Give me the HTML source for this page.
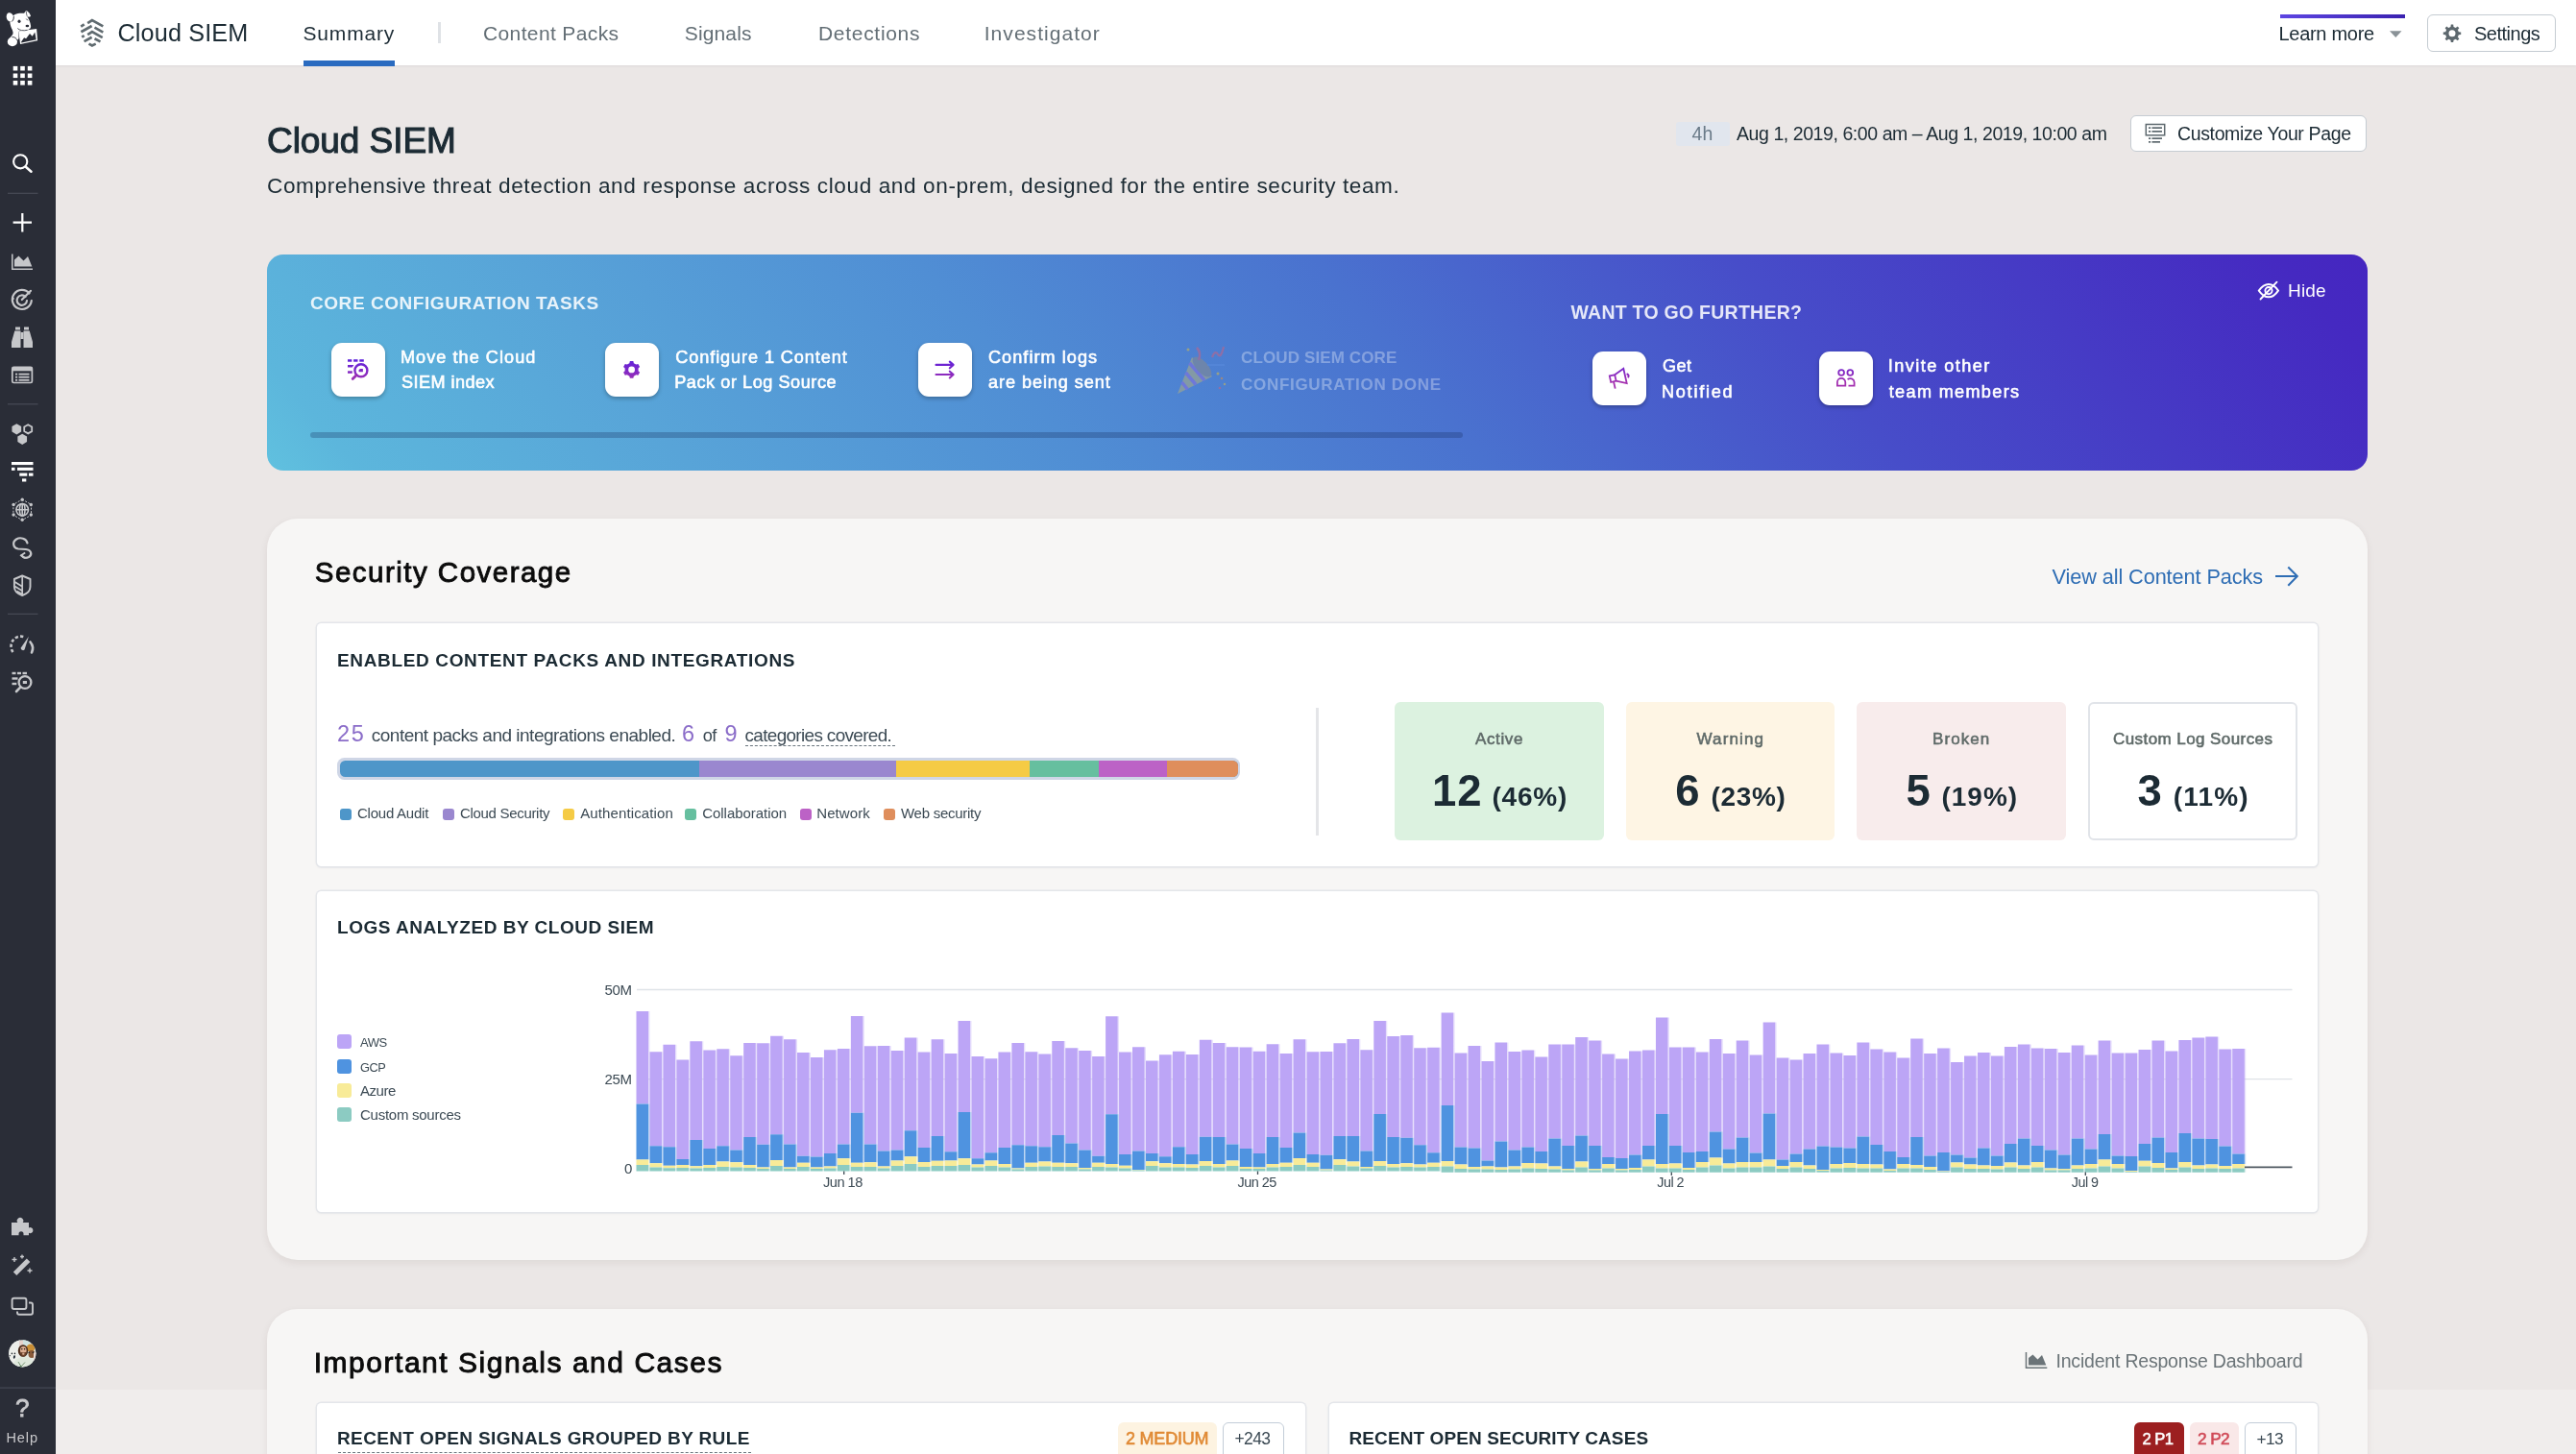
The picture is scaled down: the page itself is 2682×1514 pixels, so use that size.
<!DOCTYPE html>
<html lang="en"><head><meta charset="utf-8"><title>Cloud SIEM</title>
<style>
*{box-sizing:border-box;margin:0;padding:0}
html,body{width:2682px;height:1514px;overflow:hidden;background:#ebe7e6;font-family:"Liberation Sans",sans-serif}
.abs,.t,.b{position:absolute}
.t{white-space:pre;line-height:1;z-index:5}
svg{display:block;overflow:visible}
#side{left:0;top:0;width:58px;height:1514px;background:#2a2d37}
#top{left:58px;top:0;width:2624px;height:67.5px;background:#fff;box-shadow:0 1px 2px rgba(0,0,0,.06)}
#banner{left:278px;top:265px;width:2187px;height:224.500px;border-radius:17px;background:linear-gradient(50deg,#60c1df 0%,#5cb6dc 4%,#58a4d8 18.700%,#508ed4 36.200%,#4a72cf 53.700%,#474dc9 72%,#4529c1 96%,#4526c0 100%)}
.ib{width:56px;height:56px;border-radius:11px;background:#fff;box-shadow:0 2px 4px rgba(0,0,0,.28)}
.card{background:#f7f6f5;border-radius:32px;box-shadow:0 3px 8px rgba(60,30,20,.07)}
.in{background:#fff;border-radius:4.500px;box-shadow:0 0 0 1.400px #e4e6ea,0 1px 2px 1px rgba(120,130,150,.10)}
.stat{width:217.500px;height:144px;top:731px;border-radius:6px}
.lg{width:12px;height:12px;border-radius:3px;top:841.500px}
.lg2{width:15px;height:15px;border-radius:3px;left:351px}
.pill{border-radius:6px;height:40px;top:1481.300px}
@media (max-width:1500px){html{zoom:.5}}
</style></head><body>
<div class="b" style="left:58px;top:1447px;width:2624px;height:67px;background:#f0edec"></div>
<div id="side" class="b"></div>
<svg class="abs" style="left:0;top:0" width="58" height="1514" viewBox="0 0 58 1514"><g fill="#fff"><ellipse cx="10.500" cy="18" rx="3.700" ry="4.900" transform="rotate(-18 10.500 18)"/><path d="M13.800 16.200C16.500 13.600 21 13.500 25.100 13.700L27.100 10.900C29.200 11.200 31.600 14.400 32 17L30.100 17.700L28.300 17C29.700 19.200 31.600 23 32.100 27.100C32.200 28.500 31.700 29.500 31 29.900L28.400 31.500C26 32.700 22.500 32.600 20.500 32.200L19.300 33L19.600 40L16.500 44L11 38.500C12.800 36.800 13.900 35.500 13.500 33.500L12.800 31C11.500 28.500 10.600 26 10.300 23.200L13 22Z"/><ellipse cx="12.900" cy="43.400" rx="5.100" ry="4.900"/><path d="M19.300 32.400L38.100 30.100L39.100 42.300L21.100 46.100Z"/></g><path d="M22.100 43.600L25.100 39.300L27.100 40.300L31 35L33.700 37.700L36.300 33.400L37.700 41.300L22.300 44.600Z" fill="#2a2d37"/><ellipse cx="20" cy="22.200" rx="1.500" ry="1.700" fill="#2a2d37"/><ellipse cx="28.400" cy="27" rx="1.850" ry="1.200" fill="#2a2d37"/><path d="M18.300 29.500Q21.500 32.800 28.600 31.300" fill="none" stroke="#2a2d37" stroke-width="0.800"/><path d="M27.300 19.600L28.900 21.300" fill="none" stroke="#2a2d37" stroke-width="0.900"/><path d="M12.600 22.300Q14.600 20.500 14.400 16.800" fill="none" stroke="#2a2d37" stroke-width="0.900"/><path d="M28.200 16.800Q27.200 14 27.300 11.500" fill="none" stroke="#2a2d37" stroke-width="0.700"/><path d="M12.500 38.600Q16.500 38.200 18.300 42.500" fill="none" stroke="#2a2d37" stroke-width="0.900"/><rect x="13.7" y="68.9" width="4.600" height="4.600" fill="#fff"/><rect x="21.2" y="68.9" width="4.600" height="4.600" fill="#fff"/><rect x="28.8" y="68.9" width="4.600" height="4.600" fill="#fff"/><rect x="13.7" y="76.5" width="4.600" height="4.600" fill="#fff"/><rect x="21.2" y="76.5" width="4.600" height="4.600" fill="#fff"/><rect x="28.8" y="76.5" width="4.600" height="4.600" fill="#fff"/><rect x="13.7" y="84.0" width="4.600" height="4.600" fill="#fff"/><rect x="21.2" y="84.0" width="4.600" height="4.600" fill="#fff"/><rect x="28.8" y="84.0" width="4.600" height="4.600" fill="#fff"/><circle cx="21.200" cy="168.300" r="7.100" fill="none" stroke="#fff" stroke-width="2.100"/><path d="M26.800 173.800L32.500 178.800" stroke="#fff" stroke-width="2.500" stroke-linecap="round"/><rect x="8" y="200.7" width="31.500" height="1.200" fill="#474b56"/><path d="M13.600 231.700H33M23.300 222V241.400" stroke="#fff" stroke-width="2.200"/><path d="M12.800 264.500V280.300H34" fill="none" stroke="#c6c7ca" stroke-width="1.500"/><path d="M15 277.500V270.500L19.500 266.500L24.500 271.500L29 267L33.300 277.500Z" fill="#c6c7ca"/><g fill="none" stroke="#c6c7ca" stroke-width="2.200" stroke-linecap="round"><path d="M30.500 305.500A10 10 0 1 0 32.800 313"/><path d="M26.500 309A5.200 5.200 0 1 0 28 313"/><path d="M22.800 312L32 302.800"/></g><circle cx="13.500" cy="311" r="1.300" fill="#c6c7ca"/><g fill="#c6c7ca"><path d="M16 340.500h5v3h-5zM25 340.500h5v3h-5z"/><path d="M15.300 344.500h6.200v17.500h-9.500v-6z"/><path d="M24.500 344.500h6.200l3.300 11.500v6h-9.500z"/><rect x="21.500" y="346" width="3" height="7"/></g><rect x="12.800" y="382.300" width="20.600" height="16.200" rx="1.500" fill="none" stroke="#c6c7ca" stroke-width="1.700"/><rect x="12.800" y="382.300" width="20.600" height="4" fill="#c6c7ca"/><g fill="#c6c7ca"><rect x="16" y="388.700" width="2.200" height="1.800"/><rect x="19.500" y="388.700" width="11" height="1.800"/><rect x="16" y="391.800" width="2.200" height="1.800"/><rect x="19.500" y="391.800" width="11" height="1.800"/><rect x="16" y="394.900" width="2.200" height="1.800"/><rect x="19.500" y="394.900" width="11" height="1.800"/></g><rect x="8" y="420.2" width="31.500" height="1.200" fill="#474b56"/><polygon points="22.15,449.60 17.30,452.40 12.45,449.60 12.45,444.00 17.30,441.20 22.15,444.00" fill="#c6c7ca"/><polygon points="33.18,449.10 29.20,451.40 25.22,449.10 25.22,444.50 29.20,442.20 33.18,444.50" fill="none" stroke="#c6c7ca" stroke-width="1.800"/><polygon points="28.05,460.10 23.20,462.90 18.35,460.10 18.35,454.50 23.20,451.70 28.05,454.50" fill="#c6c7ca"/><g fill="#fff"><rect x="12" y="481" width="22.500" height="3.100"/><rect x="12" y="486.800" width="3.500" height="3.100"/><rect x="18" y="486.800" width="16.500" height="3.100"/><rect x="20.300" y="492.600" width="8" height="3.100"/><rect x="30" y="492.600" width="4.500" height="3.100"/><rect x="23" y="498.400" width="4.300" height="3.100"/></g><g fill="none" stroke="#c6c7ca" stroke-width="1.600"><circle cx="23.200" cy="530.800" r="6.300"/><ellipse cx="23.200" cy="530.800" rx="2.800" ry="6.300"/><path d="M17 530.800H29.500M23.200 524.500V537"/></g><polygon points="23.200,520 32.500,525.400 32.500,536.200 23.200,541.600 13.900,536.200 13.900,525.400" fill="none" stroke="#c6c7ca" stroke-width="1" stroke-dasharray="2 1.500"/><g fill="#c6c7ca"><circle cx="23.200" cy="520.300" r="1.700"/><circle cx="32.300" cy="525.500" r="1.700"/><circle cx="32.300" cy="536" r="1.700"/><circle cx="23.200" cy="541.300" r="1.700"/><circle cx="14.100" cy="536" r="1.700"/><circle cx="14.100" cy="525.500" r="1.700"/></g><path d="M28.500 565.500C27.500 560.500 21 559 17 561.500C12.500 564.500 13.500 570.500 19 571.500L27 572C32.500 572.500 34 577.500 30 580C27 581.500 24 580.500 22.500 578.500" fill="none" stroke="#c6c7ca" stroke-width="2.200" stroke-linecap="round"/><path d="M26.200 575.500L22 578.200L26 581.200" fill="none" stroke="#c6c7ca" stroke-width="1.800"/><path d="M23.200 599.500L31.500 603V611C31.500 615.500 27.500 618.500 23.200 620C18.900 618.500 14.900 615.500 14.900 611V603Z" fill="none" stroke="#c6c7ca" stroke-width="1.900" stroke-linejoin="round"/><path d="M23.200 599.500V620M15.500 606L22.800 610.500M15.500 610.500L22.800 615M17.500 615.500L22.800 618.500" stroke="#c6c7ca" stroke-width="1.700" fill="none"/><rect x="8" y="638.7" width="31.500" height="1.200" fill="#474b56"/><path d="M13.500 679A10.300 10.300 0 0 1 25.500 663.300" fill="none" stroke="#c6c7ca" stroke-width="2.600" stroke-dasharray="3.200 2.200"/><path d="M31.500 668.500A10.300 10.300 0 0 1 33 679.500" fill="none" stroke="#c6c7ca" stroke-width="2.600" stroke-linecap="round"/><path d="M30 662.500L25.500 676.500A2.200 2.200 0 0 1 21.800 674.500Z" fill="#c6c7ca"/><g fill="#c6c7ca"><rect x="12.500" y="699.800" width="4" height="2.400"/><rect x="18" y="699.800" width="4" height="2.400"/><rect x="23.500" y="699.800" width="4.500" height="2.400"/><rect x="12.500" y="705.300" width="6" height="2.400"/><rect x="12.500" y="710.800" width="4.800" height="2.400"/><rect x="23.800" y="709" width="4.200" height="3"/></g><circle cx="26" cy="710.500" r="6.400" fill="none" stroke="#c6c7ca" stroke-width="2.300"/><path d="M21 715.800L17 720" stroke="#c6c7ca" stroke-width="2.600" stroke-linecap="round"/><path d="M12 1273h6.300a3.300 3.300 0 1 1 5.400 0H30v5.500a3 3 0 1 1 0 5.300v2.500H24.500v-1.500a2.500 2.500 0 1 0-5 0v1.500H12z" fill="#c6c7ca"/><path d="M13.800 1324.500L27.800 1310.500L31.300 1314L17.300 1328Z" fill="#c6c7ca"/><g stroke="#c6c7ca" stroke-width="1.400"><path d="M15 1309V1314M12.500 1311.500H17.500M23 1306.500V1310.500M21 1308.500H25M31 1320.500V1325.500M28.500 1323H33.500"/></g><g fill="none" stroke="#c6c7ca" stroke-width="1.900"><rect x="12.600" y="1351.700" width="14.800" height="11.300" rx="2"/><path d="M30 1356.500h2a2 2 0 0 1 2 2V1366.800a2 2 0 0 1-2 2H20a2 2 0 0 1-2-2V1365.500"/></g><defs><clipPath id="av"><circle cx="23.300" cy="1409.300" r="14.100"/></clipPath></defs><g clip-path="url(#av)"><rect x="8" y="1394" width="32" height="32" fill="#e4e9e3"/><rect x="8" y="1394" width="13" height="32" fill="#eceeea"/><rect x="24" y="1395" width="7" height="9" fill="#cfe3e2"/><rect x="20" y="1396" width="4" height="8" fill="#e6d2cc"/><ellipse cx="32" cy="1403.500" rx="4.500" ry="4" fill="#c98e35"/><ellipse cx="33" cy="1410" rx="3.500" ry="4" fill="#8a5a3a"/><rect x="35" y="1408" width="3" height="9" fill="#ead8d2"/><circle cx="30.300" cy="1408.300" r="0.900" fill="#2a2420"/><circle cx="34.500" cy="1408.300" r="0.900" fill="#2a2420"/><ellipse cx="24.500" cy="1420.500" rx="10" ry="7.500" fill="#dfe8dc"/><path d="M19 1418l3 5 4-4.500" fill="none" stroke="#7d9a7a" stroke-width="1"/><path d="M19.500 1424.500l2-3 2 3z" fill="#4f7a52"/><ellipse cx="24" cy="1406.500" rx="5.200" ry="6.300" fill="#4a2d1d"/><ellipse cx="24.300" cy="1406.300" rx="3.300" ry="4.200" fill="#dcae92"/><path d="M21.300 1407.800q3 1.600 6 0q.300 4.200-3 5q-3.300-.800-3-5z" fill="#6a4029"/><ellipse cx="24.300" cy="1409.800" rx="1.300" ry=".900" fill="#e0b59b"/><circle cx="22.800" cy="1404.800" r="0.750" fill="#1f1a18"/><circle cx="25.600" cy="1404.800" r="0.750" fill="#1f1a18"/><circle cx="12.400" cy="1409.400" r="0.800" fill="#22262c"/><circle cx="15.400" cy="1409.400" r="0.800" fill="#22262c"/><ellipse cx="14.900" cy="1413" rx="1" ry="1.700" fill="#1b2530" transform="rotate(15 14.900 1413)"/><circle cx="10.200" cy="1411.600" r="0.700" fill="#22262c"/></g><rect x="0" y="1444.500" width="58" height="1.200" fill="#454954"/></svg>
<div id="top" class="b"></div>
<svg class="abs" style="left:76px;top:10px" width="40" height="46" viewBox="76 10 40 46"><g fill="none" stroke="#606b70" stroke-width="2.700"><path d="M91.200 24.100L95.900 21.100L107.300 27.400"/><path d="M84.200 27.600L87.700 25.400"/><path d="M84.400 33.300L95.600 27"/><path d="M98.500 28.600L107.300 33.600"/><path d="M91.200 36.100L95.900 33.100L106.700 39.100"/><path d="M85.200 38.700L87.700 37.100"/><path d="M87.600 43.100L95.600 38.700"/><path d="M98.500 40.300L104.500 43.400"/><path d="M92.500 45.600L95.900 47.500L99.700 45.600"/></g></svg>
<div class="b" style="left:315.500px;top:63.300px;width:95.300px;height:5.400px;background:#2a6bc0"></div>
<div class="b" style="left:456px;top:23px;width:2.500px;height:22px;background:#dfe2e6"></div>
<div class="b" style="left:2373.500px;top:15px;width:130.500px;height:4px;background:linear-gradient(90deg,#5d45e2,#3a22b0)"></div>
<svg class="abs" style="left:2487px;top:31px" width="15" height="9"><path d="M1 1.200H13.500L7.300 8Z" fill="#8a9297"/></svg>
<div class="b" style="left:2527px;top:15px;width:133.800px;height:38.500px;border:1.500px solid #c5ccd2;border-radius:6px;background:#fff"></div>
<svg class="abs" style="left:2542px;top:24px" width="22" height="22" viewBox="2542 24 22 22"><path d="M2551.47 27.97 L2551.78 25.58 L2554.22 25.58 L2554.53 27.97 L2556.75 28.89 L2558.65 27.42 L2560.38 29.15 L2558.91 31.05 L2559.83 33.27 L2562.22 33.58 L2562.22 36.02 L2559.83 36.33 L2558.91 38.55 L2560.38 40.45 L2558.65 42.18 L2556.75 40.71 L2554.53 41.63 L2554.22 44.02 L2551.78 44.02 L2551.47 41.63 L2549.25 40.71 L2547.35 42.18 L2545.62 40.45 L2547.09 38.55 L2546.17 36.33 L2543.78 36.02 L2543.78 33.58 L2546.17 33.27 L2547.09 31.05 L2545.62 29.15 L2547.35 27.42 L2549.25 28.89Z M2549.50 34.80 a3.50 3.50 0 1 0 7.00 0 a3.50 3.50 0 1 0 -7.00 0Z" fill="#5d686e" fill-rule="evenodd"/></svg>
<!-- time + customize -->
<div class="b" style="left:1744.500px;top:127px;width:56.500px;height:24.500px;background:#e1e6ee;border-radius:3px"></div>
<div class="b" style="left:2217.500px;top:120px;width:246.300px;height:38.300px;border:1.500px solid #c5ccd2;border-radius:6px;background:#fff"></div>
<svg class="abs" style="left:2232px;top:127px" width="24" height="24" viewBox="2232 127 24 24"><rect x="2234.300" y="129.500" width="19.400" height="11.300" fill="none" stroke="#5d686e" stroke-width="1.500"/><g fill="#5d686e"><rect x="2237" y="132.300" width="2.200" height="1.700"/><rect x="2240.500" y="132.300" width="10.500" height="1.700"/><rect x="2237" y="136" width="2.200" height="1.700"/><rect x="2240.500" y="136" width="10.500" height="1.700"/><rect x="2237" y="143.300" width="2.200" height="1.700"/><rect x="2240.500" y="143.300" width="10.500" height="1.700"/><rect x="2237" y="147" width="2.200" height="1.700"/><rect x="2240.500" y="147" width="8.500" height="1.700"/></g></svg>
<!-- banner -->
<div id="banner" class="b"></div>
<div class="b" style="left:323px;top:449.500px;width:1199.800px;height:6.800px;border-radius:3.500px;background:rgba(20,40,90,.27)"></div>
<div class="b ib" style="left:344.700px;top:357px"></div>
<div class="b ib" style="left:630px;top:357px"></div>
<div class="b ib" style="left:955.800px;top:357px"></div>
<div class="b ib" style="left:1657.700px;top:366px"></div>
<div class="b ib" style="left:1893.700px;top:366px"></div>
<svg class="abs" style="left:344px;top:356px" width="58" height="58" viewBox="344 356 58 58"><defs><linearGradient id="pg" gradientUnits="userSpaceOnUse" x1="0" y1="372" x2="0" y2="398"><stop offset="0" stop-color="#561fe0"/><stop offset="1" stop-color="#a431b0"/></linearGradient></defs><g fill="url(#pg)"><rect x="362" y="374.200" width="4.300" height="2.500"/><rect x="368.100" y="374.200" width="4.400" height="2.500"/><rect x="374.300" y="374.200" width="4.500" height="2.500"/><path d="M362 380.100h6.500l-1.800 2.500H362z"/><rect x="362" y="386.300" width="4.800" height="2.500"/><path d="M374.800 384h3.100v3.200h-4.300v-1.800z"/></g><circle cx="375.900" cy="385.800" r="6.500" fill="none" stroke="url(#pg)" stroke-width="2.400"/><path d="M370.800 391L367.200 394.600" stroke="#9a2fb4" stroke-width="2.800" stroke-linecap="round"/></svg><svg class="abs" style="left:629px;top:356px" width="58" height="58" viewBox="629 356 58 58"><defs><linearGradient id="pg" gradientUnits="userSpaceOnUse" x1="0" y1="372" x2="0" y2="398"><stop offset="0" stop-color="#561fe0"/><stop offset="1" stop-color="#a431b0"/></linearGradient></defs><path d="M655.34 378.17 L655.86 376.07 L659.34 376.07 L659.86 378.17 L662.30 379.57 L664.38 378.98 L666.12 381.99 L664.56 383.50 L664.56 386.30 L666.12 387.81 L664.38 390.82 L662.30 390.23 L659.86 391.63 L659.34 393.73 L655.86 393.73 L655.34 391.63 L652.90 390.23 L650.82 390.82 L649.08 387.81 L650.64 386.30 L650.64 383.50 L649.08 381.99 L650.82 378.98 L652.90 379.57Z M654.20 384.90 a3.40 3.40 0 1 0 6.80 0 a3.40 3.40 0 1 0 -6.80 0Z" fill="url(#pg)" fill-rule="evenodd"/></svg><svg class="abs" style="left:955px;top:356px" width="58" height="58" viewBox="955 356 58 58"><defs><linearGradient id="pg" gradientUnits="userSpaceOnUse" x1="0" y1="372" x2="0" y2="398"><stop offset="0" stop-color="#561fe0"/><stop offset="1" stop-color="#a431b0"/></linearGradient></defs><g fill="none" stroke="url(#pg)" stroke-width="2.100" stroke-linecap="round" stroke-linejoin="round"><path d="M974.500 379.900H992.300M988.800 376.600L992.600 379.900L988.800 383.300"/><path d="M974.500 390H992.300M988.800 386.700L992.600 390L988.800 393.500"/></g></svg><svg class="abs" style="left:1657px;top:365px" width="58" height="58" viewBox="1657 365 58 58"><defs><linearGradient id="pg" gradientUnits="userSpaceOnUse" x1="0" y1="381" x2="0" y2="407"><stop offset="0" stop-color="#561fe0"/><stop offset="1" stop-color="#a431b0"/></linearGradient></defs><g fill="none" stroke="url(#pg)" stroke-width="1.800" stroke-linejoin="miter"><path d="M1675.800 391.400L1681.200 390.300L1682.600 396.600L1677.200 398Z"/><path d="M1681.200 390.300L1690.300 383.700L1693.700 399.100L1682.600 396.600"/><path d="M1680.100 397.800L1681.700 404.600"/><path d="M1693.600 389.300Q1696.800 390.500 1695 393.300" stroke-width="2"/></g></svg><svg class="abs" style="left:1893px;top:365px" width="58" height="58" viewBox="1893 365 58 58"><defs><linearGradient id="pg" gradientUnits="userSpaceOnUse" x1="0" y1="381" x2="0" y2="407"><stop offset="0" stop-color="#561fe0"/><stop offset="1" stop-color="#a431b0"/></linearGradient></defs><g fill="none" stroke="url(#pg)" stroke-width="1.800"><circle cx="1917.100" cy="388" r="2.900"/><circle cx="1926.300" cy="388" r="2.900"/><path d="M1912.900 401.600V398a4.200 4.200 0 0 1 8.400 0V401.600Z"/><path d="M1923.600 395.200a4.200 4.200 0 0 1 7 2.800V401.600H1924.500"/></g></svg><svg class="abs" style="left:1222px;top:356px;opacity:.5" width="62" height="60" viewBox="1222 356 62 60"><path d="M1241 372L1226 410L1262 392Z" fill="#b9b27a"/><path d="M1238.500 378L1254 396M1234.500 388L1245 400.500M1230.500 398L1236.500 405.500" stroke="#8f6fe0" stroke-width="3.500"/><ellipse cx="1251.500" cy="382" rx="6" ry="13" transform="rotate(-42 1251.500 382)" fill="#8d8a86"/><path d="M1246 362q5 5 2 13" fill="none" stroke="#d0607c" stroke-width="2.500"/><path d="M1262 372q3-8 6-3t6-8" fill="none" stroke="#d0607c" stroke-width="2.200"/><path d="M1257 380h18" stroke="#5f8fe0" stroke-width="1.500"/><circle cx="1237" cy="364" r="1.500" fill="#e0c040"/><circle cx="1268" cy="389" r="1.500" fill="#e0c040"/><circle cx="1272" cy="394" r="1.300" fill="#e09040"/><circle cx="1270" cy="404" r="1.300" fill="#d0607c"/><circle cx="1275" cy="400" r="1.200" fill="#e0c040"/></svg><svg class="abs" style="left:2349px;top:291px" width="26" height="24" viewBox="2349 291 26 24"><g fill="none" stroke="#fff" stroke-width="1.900" stroke-linecap="round"><path d="M2351.800 302.600Q2356.500 296 2362 296Q2367.500 296 2372 302.600Q2367.500 309.300 2362 309.300Q2356.500 309.300 2351.800 302.600Z"/><circle cx="2362" cy="302.600" r="3.600"/><path d="M2353.500 311.500L2370.500 293.700"/></g></svg>
<!-- security coverage -->
<div class="b card" style="left:278px;top:540px;width:2186.500px;height:772px"></div>
<svg class="abs" style="left:2367px;top:588px" width="28" height="24" viewBox="2367 588 28 24"><path d="M2369 600H2391.500M2382.300 590.500L2391.800 600L2382.300 609.700" fill="none" stroke="#2e6db4" stroke-width="2"/></svg>
<div class="b in" style="left:330px;top:649px;width:2083px;height:253.300px"></div>
<div class="b" style="left:775.500px;top:775.500px;width:156px;height:0;border-top:1.500px dashed #6a757d"></div>
<div class="b" style="left:351px;top:789.400px;width:940.200px;height:22.200px;border-radius:7.500px;background:#cfd6e6"></div>
<div class="b" style="left:353.500px;top:792px;width:935px;height:16.800px;border-radius:5.500px;overflow:hidden;background:#4e96c9">
 <div class="b" style="left:374.750px;top:0;width:205px;height:17px;background:#9a87cf"></div>
 <div class="b" style="left:579.500px;top:0;width:139px;height:17px;background:#f5cb45"></div>
 <div class="b" style="left:718.500px;top:0;width:72px;height:17px;background:#66bf9f"></div>
 <div class="b" style="left:790.500px;top:0;width:71.300px;height:17px;background:#bc62c6"></div>
 <div class="b" style="left:861.750px;top:0;width:80px;height:17px;background:#df8e5c"></div>
</div>
<div class="b lg" style="left:353.800px;background:#4e96c9"></div>
<div class="b lg" style="left:460.500px;background:#9a87cf"></div>
<div class="b lg" style="left:585.500px;background:#f5cb45"></div>
<div class="b lg" style="left:712.500px;background:#66bf9f"></div>
<div class="b lg" style="left:832.500px;background:#bc62c6"></div>
<div class="b lg" style="left:919.700px;background:#df8e5c"></div>
<div class="b" style="left:1370.300px;top:737px;width:2.600px;height:132.500px;background:#e4e5e8"></div>
<div class="b stat" style="left:1452px;background:#dcf2e0"></div>
<div class="b stat" style="left:1692.500px;background:#fef5e4"></div>
<div class="b stat" style="left:1933px;background:#f8ecec"></div>
<div class="b stat" style="left:2174px;background:#fff;border:2px solid #e1e4e9"></div>
<!-- chart card -->
<div class="b in" style="left:330px;top:928px;width:2083px;height:333.700px"></div>
<div class="b lg2" style="top:1077.250px;background:#bca5f6"></div>
<div class="b lg2" style="top:1102.500px;background:#4f93e0"></div>
<div class="b lg2" style="top:1128px;background:#f8eb98"></div>
<div class="b lg2" style="top:1153.250px;background:#8ccbc2"></div>
<svg class="abs" style="left:0;top:0;z-index:3" width="2682" height="1514" viewBox="0 0 2682 1514">
<path d="M663 1030.500H2386.500M663 1123.600H2386.500" stroke="#dfe3e8" stroke-width="1.300" fill="none"/>
<path d="M662.50 1053.00h12.60V1149.50h-12.60zM676.46 1095.25h12.60V1193.25h-12.60zM690.42 1087.75h12.60V1194.25h-12.60zM704.38 1103.50h12.60V1207.00h-12.60zM718.34 1084.25h12.60V1187.00h-12.60zM732.30 1093.50h12.60V1196.00h-12.60zM746.26 1092.25h12.60V1193.25h-12.60zM760.22 1099.25h12.60V1197.50h-12.60zM774.18 1086.00h12.60V1184.00h-12.60zM788.14 1086.25h12.60V1191.75h-12.60zM802.10 1078.75h12.60V1181.25h-12.60zM816.06 1082.25h12.60V1191.50h-12.60zM830.02 1096.00h12.60V1203.75h-12.60zM843.98 1101.00h12.60V1204.50h-12.60zM857.94 1093.25h12.60V1201.00h-12.60zM871.90 1092.00h12.60V1191.50h-12.60zM885.86 1058.00h12.60V1158.75h-12.60zM899.82 1089.25h12.60V1191.50h-12.60zM913.78 1089.00h12.60V1198.50h-12.60zM927.74 1094.00h12.60V1197.50h-12.60zM941.70 1080.50h12.60V1177.25h-12.60zM955.66 1095.50h12.60V1195.00h-12.60zM969.62 1082.25h12.60V1183.00h-12.60zM983.58 1097.00h12.60V1199.25h-12.60zM997.54 1063.00h12.60V1158.00h-12.60zM1011.50 1100.00h12.60V1206.25h-12.60zM1025.46 1102.25h12.60V1200.25h-12.60zM1039.42 1095.50h12.60V1195.00h-12.60zM1053.38 1086.00h12.60V1192.25h-12.60zM1067.34 1095.25h12.60V1193.25h-12.60zM1081.30 1097.50h12.60V1194.25h-12.60zM1095.26 1084.00h12.60V1182.00h-12.60zM1109.22 1091.25h12.60V1190.50h-12.60zM1123.18 1094.00h12.60V1197.50h-12.60zM1137.14 1100.00h12.60V1203.75h-12.60zM1151.10 1058.25h12.60V1160.25h-12.60zM1165.06 1095.50h12.60V1202.00h-12.60zM1179.02 1090.25h12.60V1198.50h-12.60zM1192.98 1104.50h12.60V1201.00h-12.60zM1206.94 1098.25h12.60V1204.25h-12.60zM1220.90 1094.75h12.60V1194.25h-12.60zM1234.86 1098.00h12.60V1202.00h-12.60zM1248.82 1082.75h12.60V1183.75h-12.60zM1262.78 1086.00h12.60V1184.00h-12.60zM1276.74 1090.25h12.60V1191.50h-12.60zM1290.70 1090.50h12.60V1196.00h-12.60zM1304.66 1094.75h12.60V1201.00h-12.60zM1318.62 1087.25h12.60V1184.00h-12.60zM1332.58 1097.00h12.60V1195.00h-12.60zM1346.54 1082.25h12.60V1179.50h-12.60zM1360.50 1095.25h12.60V1202.00h-12.60zM1374.46 1095.00h12.60V1202.75h-12.60zM1388.42 1086.25h12.60V1183.00h-12.60zM1402.38 1082.00h12.60V1183.00h-12.60zM1416.34 1093.25h12.60V1198.50h-12.60zM1430.30 1063.00h12.60V1160.00h-12.60zM1444.26 1079.00h12.60V1184.00h-12.60zM1458.22 1078.00h12.60V1184.75h-12.60zM1472.18 1091.25h12.60V1192.25h-12.60zM1486.14 1090.75h12.60V1200.25h-12.60zM1500.60 1054.38h12.60V1150.88h-12.60zM1514.56 1096.62h12.60V1194.62h-12.60zM1528.52 1089.12h12.60V1195.62h-12.60zM1542.48 1104.88h12.60V1208.38h-12.60zM1556.44 1085.62h12.60V1188.38h-12.60zM1570.40 1094.88h12.60V1197.38h-12.60zM1584.36 1093.62h12.60V1194.62h-12.60zM1598.32 1100.62h12.60V1198.88h-12.60zM1612.28 1087.38h12.60V1185.38h-12.60zM1626.24 1087.62h12.60V1193.12h-12.60zM1640.20 1080.12h12.60V1182.62h-12.60zM1654.16 1083.62h12.60V1192.88h-12.60zM1668.12 1097.38h12.60V1205.12h-12.60zM1682.08 1102.38h12.60V1205.88h-12.60zM1696.04 1094.62h12.60V1202.38h-12.60zM1710.00 1093.38h12.60V1192.88h-12.60zM1723.96 1059.38h12.60V1160.12h-12.60zM1737.92 1090.62h12.60V1192.88h-12.60zM1751.88 1090.38h12.60V1199.88h-12.60zM1765.84 1095.38h12.60V1198.88h-12.60zM1779.80 1081.88h12.60V1178.62h-12.60zM1793.76 1096.88h12.60V1196.38h-12.60zM1807.72 1083.62h12.60V1184.38h-12.60zM1821.68 1098.38h12.60V1200.62h-12.60zM1835.64 1064.38h12.60V1159.38h-12.60zM1849.60 1101.38h12.60V1207.62h-12.60zM1863.56 1103.62h12.60V1201.62h-12.60zM1877.52 1096.88h12.60V1196.38h-12.60zM1891.48 1087.38h12.60V1193.62h-12.60zM1905.44 1096.62h12.60V1194.62h-12.60zM1919.40 1098.88h12.60V1195.62h-12.60zM1933.36 1085.38h12.60V1183.38h-12.60zM1947.32 1092.62h12.60V1191.88h-12.60zM1961.28 1095.38h12.60V1198.88h-12.60zM1975.24 1101.38h12.60V1205.12h-12.60zM1989.20 1081.50h12.60V1184.00h-12.60zM2003.16 1096.88h12.60V1203.38h-12.60zM2017.12 1091.62h12.60V1199.88h-12.60zM2031.08 1105.88h12.60V1202.38h-12.60zM2045.04 1099.62h12.60V1205.62h-12.60zM2059.00 1096.12h12.60V1195.62h-12.60zM2072.96 1099.38h12.60V1203.38h-12.60zM2086.92 1090.00h12.60V1191.00h-12.60zM2100.88 1087.38h12.60V1185.38h-12.60zM2114.84 1091.62h12.60V1192.88h-12.60zM2128.80 1091.88h12.60V1197.38h-12.60zM2142.76 1096.12h12.60V1202.38h-12.60zM2156.72 1088.62h12.60V1185.38h-12.60zM2170.68 1098.38h12.60V1196.38h-12.60zM2184.64 1083.62h12.60V1180.88h-12.60zM2198.60 1096.62h12.60V1203.38h-12.60zM2212.56 1096.38h12.60V1204.12h-12.60zM2226.52 1093.00h12.60V1191.00h-12.60zM2240.48 1083.38h12.60V1184.38h-12.60zM2254.44 1094.62h12.60V1199.88h-12.60zM2268.40 1083.00h12.60V1180.00h-12.60zM2282.36 1080.38h12.60V1185.38h-12.60zM2296.32 1079.38h12.60V1186.12h-12.60zM2310.28 1092.62h12.60V1193.62h-12.60zM2324.24 1092.12h12.60V1201.62h-12.60z" fill="#bca5f6"/><path d="M675.10 1053.00h1.36V1149.50h-1.36zM689.06 1095.25h1.36V1193.25h-1.36zM703.02 1087.75h1.36V1194.25h-1.36zM716.98 1103.50h1.36V1207.00h-1.36zM730.94 1084.25h1.36V1187.00h-1.36zM744.90 1093.50h1.36V1196.00h-1.36zM758.86 1092.25h1.36V1193.25h-1.36zM772.82 1099.25h1.36V1197.50h-1.36zM786.78 1086.00h1.36V1184.00h-1.36zM800.74 1086.25h1.36V1191.75h-1.36zM814.70 1078.75h1.36V1181.25h-1.36zM828.66 1082.25h1.36V1191.50h-1.36zM842.62 1096.00h1.36V1203.75h-1.36zM856.58 1101.00h1.36V1204.50h-1.36zM870.54 1093.25h1.36V1201.00h-1.36zM884.50 1092.00h1.36V1191.50h-1.36zM898.46 1058.00h1.36V1158.75h-1.36zM912.42 1089.25h1.36V1191.50h-1.36zM926.38 1089.00h1.36V1198.50h-1.36zM940.34 1094.00h1.36V1197.50h-1.36zM954.30 1080.50h1.36V1177.25h-1.36zM968.26 1095.50h1.36V1195.00h-1.36zM982.22 1082.25h1.36V1183.00h-1.36zM996.18 1097.00h1.36V1199.25h-1.36zM1010.14 1063.00h1.36V1158.00h-1.36zM1024.10 1100.00h1.36V1206.25h-1.36zM1038.06 1102.25h1.36V1200.25h-1.36zM1052.02 1095.50h1.36V1195.00h-1.36zM1065.98 1086.00h1.36V1192.25h-1.36zM1079.94 1095.25h1.36V1193.25h-1.36zM1093.90 1097.50h1.36V1194.25h-1.36zM1107.86 1084.00h1.36V1182.00h-1.36zM1121.82 1091.25h1.36V1190.50h-1.36zM1135.78 1094.00h1.36V1197.50h-1.36zM1149.74 1100.00h1.36V1203.75h-1.36zM1163.70 1058.25h1.36V1160.25h-1.36zM1177.66 1095.50h1.36V1202.00h-1.36zM1191.62 1090.25h1.36V1198.50h-1.36zM1205.58 1104.50h1.36V1201.00h-1.36zM1219.54 1098.25h1.36V1204.25h-1.36zM1233.50 1094.75h1.36V1194.25h-1.36zM1247.46 1098.00h1.36V1202.00h-1.36zM1261.42 1082.75h1.36V1183.75h-1.36zM1275.38 1086.00h1.36V1184.00h-1.36zM1289.34 1090.25h1.36V1191.50h-1.36zM1303.30 1090.50h1.36V1196.00h-1.36zM1317.26 1094.75h1.36V1201.00h-1.36zM1331.22 1087.25h1.36V1184.00h-1.36zM1345.18 1097.00h1.36V1195.00h-1.36zM1359.14 1082.25h1.36V1179.50h-1.36zM1373.10 1095.25h1.36V1202.00h-1.36zM1387.06 1095.00h1.36V1202.75h-1.36zM1401.02 1086.25h1.36V1183.00h-1.36zM1414.98 1082.00h1.36V1183.00h-1.36zM1428.94 1093.25h1.36V1198.50h-1.36zM1442.90 1063.00h1.36V1160.00h-1.36zM1456.86 1079.00h1.36V1184.00h-1.36zM1470.82 1078.00h1.36V1184.75h-1.36zM1484.78 1091.25h1.36V1192.25h-1.36zM1498.74 1090.75h1.36V1200.25h-1.36zM1513.20 1054.38h1.36V1150.88h-1.36zM1527.16 1096.62h1.36V1194.62h-1.36zM1541.12 1089.12h1.36V1195.62h-1.36zM1555.08 1104.88h1.36V1208.38h-1.36zM1569.04 1085.62h1.36V1188.38h-1.36zM1583.00 1094.88h1.36V1197.38h-1.36zM1596.96 1093.62h1.36V1194.62h-1.36zM1610.92 1100.62h1.36V1198.88h-1.36zM1624.88 1087.38h1.36V1185.38h-1.36zM1638.84 1087.62h1.36V1193.12h-1.36zM1652.80 1080.12h1.36V1182.62h-1.36zM1666.76 1083.62h1.36V1192.88h-1.36zM1680.72 1097.38h1.36V1205.12h-1.36zM1694.68 1102.38h1.36V1205.88h-1.36zM1708.64 1094.62h1.36V1202.38h-1.36zM1722.60 1093.38h1.36V1192.88h-1.36zM1736.56 1059.38h1.36V1160.12h-1.36zM1750.52 1090.62h1.36V1192.88h-1.36zM1764.48 1090.38h1.36V1199.88h-1.36zM1778.44 1095.38h1.36V1198.88h-1.36zM1792.40 1081.88h1.36V1178.62h-1.36zM1806.36 1096.88h1.36V1196.38h-1.36zM1820.32 1083.62h1.36V1184.38h-1.36zM1834.28 1098.38h1.36V1200.62h-1.36zM1848.24 1064.38h1.36V1159.38h-1.36zM1862.20 1101.38h1.36V1207.62h-1.36zM1876.16 1103.62h1.36V1201.62h-1.36zM1890.12 1096.88h1.36V1196.38h-1.36zM1904.08 1087.38h1.36V1193.62h-1.36zM1918.04 1096.62h1.36V1194.62h-1.36zM1932.00 1098.88h1.36V1195.62h-1.36zM1945.96 1085.38h1.36V1183.38h-1.36zM1959.92 1092.62h1.36V1191.88h-1.36zM1973.88 1095.38h1.36V1198.88h-1.36zM1987.84 1101.38h1.36V1205.12h-1.36zM2001.80 1081.50h1.36V1184.00h-1.36zM2015.76 1096.88h1.36V1203.38h-1.36zM2029.72 1091.62h1.36V1199.88h-1.36zM2043.68 1105.88h1.36V1202.38h-1.36zM2057.64 1099.62h1.36V1205.62h-1.36zM2071.60 1096.12h1.36V1195.62h-1.36zM2085.56 1099.38h1.36V1203.38h-1.36zM2099.52 1090.00h1.36V1191.00h-1.36zM2113.48 1087.38h1.36V1185.38h-1.36zM2127.44 1091.62h1.36V1192.88h-1.36zM2141.40 1091.88h1.36V1197.38h-1.36zM2155.36 1096.12h1.36V1202.38h-1.36zM2169.32 1088.62h1.36V1185.38h-1.36zM2183.28 1098.38h1.36V1196.38h-1.36zM2197.24 1083.62h1.36V1180.88h-1.36zM2211.20 1096.62h1.36V1203.38h-1.36zM2225.16 1096.38h1.36V1204.12h-1.36zM2239.12 1093.00h1.36V1191.00h-1.36zM2253.08 1083.38h1.36V1184.38h-1.36zM2267.04 1094.62h1.36V1199.88h-1.36zM2281.00 1083.00h1.36V1180.00h-1.36zM2294.96 1080.38h1.36V1185.38h-1.36zM2308.92 1079.38h1.36V1186.12h-1.36zM2322.88 1092.62h1.36V1193.62h-1.36zM2336.84 1092.12h1.36V1201.62h-1.36z" fill="#bca5f6" opacity="0.36"/><path d="M662.50 1149.50h12.60V1207.50h-12.60zM676.46 1193.25h12.60V1211.25h-12.60zM690.42 1194.25h12.60V1213.75h-12.60zM704.38 1207.00h12.60V1213.00h-12.60zM718.34 1187.00h12.60V1214.25h-12.60zM732.30 1196.00h12.60V1213.00h-12.60zM746.26 1193.25h12.60V1209.50h-12.60zM760.22 1197.50h12.60V1210.25h-12.60zM774.18 1184.00h12.60V1213.00h-12.60zM788.14 1191.75h12.60V1215.50h-12.60zM802.10 1181.25h12.60V1208.00h-12.60zM816.06 1191.50h12.60V1215.50h-12.60zM830.02 1203.75h12.60V1210.75h-12.60zM843.98 1204.50h12.60V1215.50h-12.60zM857.94 1201.00h12.60V1214.50h-12.60zM871.90 1191.50h12.60V1206.25h-12.60zM885.86 1158.75h12.60V1210.75h-12.60zM899.82 1191.50h12.60V1210.25h-12.60zM913.78 1198.50h12.60V1214.50h-12.60zM927.74 1197.50h12.60V1208.50h-12.60zM941.70 1177.25h12.60V1204.25h-12.60zM955.66 1195.00h12.60V1210.00h-12.60zM969.62 1183.00h12.60V1208.75h-12.60zM983.58 1199.25h12.60V1208.50h-12.60zM997.54 1158.00h12.60V1206.25h-12.60zM1011.50 1206.25h12.60V1212.50h-12.60zM1025.46 1200.25h12.60V1208.50h-12.60zM1039.42 1195.00h12.60V1212.00h-12.60zM1053.38 1192.25h12.60V1216.50h-12.60zM1067.34 1193.25h12.60V1210.75h-12.60zM1081.30 1194.25h12.60V1209.50h-12.60zM1095.26 1182.00h12.60V1210.75h-12.60zM1109.22 1190.50h12.60V1211.25h-12.60zM1123.18 1197.50h12.60V1216.00h-12.60zM1137.14 1203.75h12.60V1210.75h-12.60zM1151.10 1160.25h12.60V1212.00h-12.60zM1165.06 1202.00h12.60V1213.75h-12.60zM1179.02 1198.50h12.60V1218.00h-12.60zM1192.98 1201.00h12.60V1209.25h-12.60zM1206.94 1204.25h12.60V1211.25h-12.60zM1220.90 1194.25h12.60V1212.00h-12.60zM1234.86 1202.00h12.60V1212.50h-12.60zM1248.82 1183.75h12.60V1209.00h-12.60zM1262.78 1184.00h12.60V1212.00h-12.60zM1276.74 1191.50h12.60V1208.50h-12.60zM1290.70 1196.00h12.60V1215.00h-12.60zM1304.66 1201.00h12.60V1215.50h-12.60zM1318.62 1184.00h12.60V1212.00h-12.60zM1332.58 1195.00h12.60V1210.75h-12.60zM1346.54 1179.50h12.60V1206.00h-12.60zM1360.50 1202.00h12.60V1210.75h-12.60zM1374.46 1202.75h12.60V1217.50h-12.60zM1388.42 1183.00h12.60V1207.25h-12.60zM1402.38 1183.00h12.60V1209.50h-12.60zM1416.34 1198.50h12.60V1215.00h-12.60zM1430.30 1160.00h12.60V1209.00h-12.60zM1444.26 1184.00h12.60V1212.00h-12.60zM1458.22 1184.75h12.60V1211.25h-12.60zM1472.18 1192.25h12.60V1212.50h-12.60zM1486.14 1200.25h12.60V1210.75h-12.60zM1500.60 1150.88h12.60V1208.88h-12.60zM1514.56 1194.62h12.60V1212.62h-12.60zM1528.52 1195.62h12.60V1215.12h-12.60zM1542.48 1208.38h12.60V1214.38h-12.60zM1556.44 1188.38h12.60V1215.62h-12.60zM1570.40 1197.38h12.60V1214.38h-12.60zM1584.36 1194.62h12.60V1210.88h-12.60zM1598.32 1198.88h12.60V1211.62h-12.60zM1612.28 1185.38h12.60V1214.38h-12.60zM1626.24 1193.12h12.60V1216.88h-12.60zM1640.20 1182.62h12.60V1209.38h-12.60zM1654.16 1192.88h12.60V1216.88h-12.60zM1668.12 1205.12h12.60V1212.12h-12.60zM1682.08 1205.88h12.60V1216.88h-12.60zM1696.04 1202.38h12.60V1215.88h-12.60zM1710.00 1192.88h12.60V1207.62h-12.60zM1723.96 1160.12h12.60V1212.12h-12.60zM1737.92 1192.88h12.60V1211.62h-12.60zM1751.88 1199.88h12.60V1215.88h-12.60zM1765.84 1198.88h12.60V1209.88h-12.60zM1779.80 1178.62h12.60V1205.62h-12.60zM1793.76 1196.38h12.60V1211.38h-12.60zM1807.72 1184.38h12.60V1210.12h-12.60zM1821.68 1200.62h12.60V1209.88h-12.60zM1835.64 1159.38h12.60V1207.62h-12.60zM1849.60 1207.62h12.60V1213.88h-12.60zM1863.56 1201.62h12.60V1209.88h-12.60zM1877.52 1196.38h12.60V1213.38h-12.60zM1891.48 1193.62h12.60V1217.88h-12.60zM1905.44 1194.62h12.60V1212.12h-12.60zM1919.40 1195.62h12.60V1210.88h-12.60zM1933.36 1183.38h12.60V1212.12h-12.60zM1947.32 1191.88h12.60V1212.62h-12.60zM1961.28 1198.88h12.60V1217.38h-12.60zM1975.24 1205.12h12.60V1212.12h-12.60zM1989.20 1184.00h12.60V1213.00h-12.60zM2003.16 1203.38h12.60V1215.12h-12.60zM2017.12 1199.88h12.60V1219.38h-12.60zM2031.08 1202.38h12.60V1210.62h-12.60zM2045.04 1205.62h12.60V1212.62h-12.60zM2059.00 1195.62h12.60V1213.38h-12.60zM2072.96 1203.38h12.60V1213.88h-12.60zM2086.92 1191.00h12.60V1210.50h-12.60zM2100.88 1185.38h12.60V1213.38h-12.60zM2114.84 1192.88h12.60V1209.88h-12.60zM2128.80 1197.38h12.60V1216.38h-12.60zM2142.76 1202.38h12.60V1216.88h-12.60zM2156.72 1185.38h12.60V1213.38h-12.60zM2170.68 1196.38h12.60V1212.12h-12.60zM2184.64 1180.88h12.60V1207.38h-12.60zM2198.60 1203.38h12.60V1212.12h-12.60zM2212.56 1204.12h12.60V1218.88h-12.60zM2226.52 1191.00h12.60V1208.75h-12.60zM2240.48 1184.38h12.60V1210.88h-12.60zM2254.44 1199.88h12.60V1216.38h-12.60zM2268.40 1180.00h12.60V1210.00h-12.60zM2282.36 1185.38h12.60V1213.38h-12.60zM2296.32 1186.12h12.60V1212.62h-12.60zM2310.28 1193.62h12.60V1213.88h-12.60zM2324.24 1201.62h12.60V1212.12h-12.60z" fill="#4f93e0"/><path d="M675.10 1149.50h1.36V1207.50h-1.36zM689.06 1193.25h1.36V1211.25h-1.36zM703.02 1194.25h1.36V1213.75h-1.36zM716.98 1207.00h1.36V1213.00h-1.36zM730.94 1187.00h1.36V1214.25h-1.36zM744.90 1196.00h1.36V1213.00h-1.36zM758.86 1193.25h1.36V1209.50h-1.36zM772.82 1197.50h1.36V1210.25h-1.36zM786.78 1184.00h1.36V1213.00h-1.36zM800.74 1191.75h1.36V1215.50h-1.36zM814.70 1181.25h1.36V1208.00h-1.36zM828.66 1191.50h1.36V1215.50h-1.36zM842.62 1203.75h1.36V1210.75h-1.36zM856.58 1204.50h1.36V1215.50h-1.36zM870.54 1201.00h1.36V1214.50h-1.36zM884.50 1191.50h1.36V1206.25h-1.36zM898.46 1158.75h1.36V1210.75h-1.36zM912.42 1191.50h1.36V1210.25h-1.36zM926.38 1198.50h1.36V1214.50h-1.36zM940.34 1197.50h1.36V1208.50h-1.36zM954.30 1177.25h1.36V1204.25h-1.36zM968.26 1195.00h1.36V1210.00h-1.36zM982.22 1183.00h1.36V1208.75h-1.36zM996.18 1199.25h1.36V1208.50h-1.36zM1010.14 1158.00h1.36V1206.25h-1.36zM1024.10 1206.25h1.36V1212.50h-1.36zM1038.06 1200.25h1.36V1208.50h-1.36zM1052.02 1195.00h1.36V1212.00h-1.36zM1065.98 1192.25h1.36V1216.50h-1.36zM1079.94 1193.25h1.36V1210.75h-1.36zM1093.90 1194.25h1.36V1209.50h-1.36zM1107.86 1182.00h1.36V1210.75h-1.36zM1121.82 1190.50h1.36V1211.25h-1.36zM1135.78 1197.50h1.36V1216.00h-1.36zM1149.74 1203.75h1.36V1210.75h-1.36zM1163.70 1160.25h1.36V1212.00h-1.36zM1177.66 1202.00h1.36V1213.75h-1.36zM1191.62 1198.50h1.36V1218.00h-1.36zM1205.58 1201.00h1.36V1209.25h-1.36zM1219.54 1204.25h1.36V1211.25h-1.36zM1233.50 1194.25h1.36V1212.00h-1.36zM1247.46 1202.00h1.36V1212.50h-1.36zM1261.42 1183.75h1.36V1209.00h-1.36zM1275.38 1184.00h1.36V1212.00h-1.36zM1289.34 1191.50h1.36V1208.50h-1.36zM1303.30 1196.00h1.36V1215.00h-1.36zM1317.26 1201.00h1.36V1215.50h-1.36zM1331.22 1184.00h1.36V1212.00h-1.36zM1345.18 1195.00h1.36V1210.75h-1.36zM1359.14 1179.50h1.36V1206.00h-1.36zM1373.10 1202.00h1.36V1210.75h-1.36zM1387.06 1202.75h1.36V1217.50h-1.36zM1401.02 1183.00h1.36V1207.25h-1.36zM1414.98 1183.00h1.36V1209.50h-1.36zM1428.94 1198.50h1.36V1215.00h-1.36zM1442.90 1160.00h1.36V1209.00h-1.36zM1456.86 1184.00h1.36V1212.00h-1.36zM1470.82 1184.75h1.36V1211.25h-1.36zM1484.78 1192.25h1.36V1212.50h-1.36zM1498.74 1200.25h1.36V1210.75h-1.36zM1513.20 1150.88h1.36V1208.88h-1.36zM1527.16 1194.62h1.36V1212.62h-1.36zM1541.12 1195.62h1.36V1215.12h-1.36zM1555.08 1208.38h1.36V1214.38h-1.36zM1569.04 1188.38h1.36V1215.62h-1.36zM1583.00 1197.38h1.36V1214.38h-1.36zM1596.96 1194.62h1.36V1210.88h-1.36zM1610.92 1198.88h1.36V1211.62h-1.36zM1624.88 1185.38h1.36V1214.38h-1.36zM1638.84 1193.12h1.36V1216.88h-1.36zM1652.80 1182.62h1.36V1209.38h-1.36zM1666.76 1192.88h1.36V1216.88h-1.36zM1680.72 1205.12h1.36V1212.12h-1.36zM1694.68 1205.88h1.36V1216.88h-1.36zM1708.64 1202.38h1.36V1215.88h-1.36zM1722.60 1192.88h1.36V1207.62h-1.36zM1736.56 1160.12h1.36V1212.12h-1.36zM1750.52 1192.88h1.36V1211.62h-1.36zM1764.48 1199.88h1.36V1215.88h-1.36zM1778.44 1198.88h1.36V1209.88h-1.36zM1792.40 1178.62h1.36V1205.62h-1.36zM1806.36 1196.38h1.36V1211.38h-1.36zM1820.32 1184.38h1.36V1210.12h-1.36zM1834.28 1200.62h1.36V1209.88h-1.36zM1848.24 1159.38h1.36V1207.62h-1.36zM1862.20 1207.62h1.36V1213.88h-1.36zM1876.16 1201.62h1.36V1209.88h-1.36zM1890.12 1196.38h1.36V1213.38h-1.36zM1904.08 1193.62h1.36V1217.88h-1.36zM1918.04 1194.62h1.36V1212.12h-1.36zM1932.00 1195.62h1.36V1210.88h-1.36zM1945.96 1183.38h1.36V1212.12h-1.36zM1959.92 1191.88h1.36V1212.62h-1.36zM1973.88 1198.88h1.36V1217.38h-1.36zM1987.84 1205.12h1.36V1212.12h-1.36zM2001.80 1184.00h1.36V1213.00h-1.36zM2015.76 1203.38h1.36V1215.12h-1.36zM2029.72 1199.88h1.36V1219.38h-1.36zM2043.68 1202.38h1.36V1210.62h-1.36zM2057.64 1205.62h1.36V1212.62h-1.36zM2071.60 1195.62h1.36V1213.38h-1.36zM2085.56 1203.38h1.36V1213.88h-1.36zM2099.52 1191.00h1.36V1210.50h-1.36zM2113.48 1185.38h1.36V1213.38h-1.36zM2127.44 1192.88h1.36V1209.88h-1.36zM2141.40 1197.38h1.36V1216.38h-1.36zM2155.36 1202.38h1.36V1216.88h-1.36zM2169.32 1185.38h1.36V1213.38h-1.36zM2183.28 1196.38h1.36V1212.12h-1.36zM2197.24 1180.88h1.36V1207.38h-1.36zM2211.20 1203.38h1.36V1212.12h-1.36zM2225.16 1204.12h1.36V1218.88h-1.36zM2239.12 1191.00h1.36V1208.75h-1.36zM2253.08 1184.38h1.36V1210.88h-1.36zM2267.04 1199.88h1.36V1216.38h-1.36zM2281.00 1180.00h1.36V1210.00h-1.36zM2294.96 1185.38h1.36V1213.38h-1.36zM2308.92 1186.12h1.36V1212.62h-1.36zM2322.88 1193.62h1.36V1213.88h-1.36zM2336.84 1201.62h1.36V1212.12h-1.36z" fill="#4f93e0" opacity="0.36"/><path d="M662.50 1207.50h12.60V1213.00h-12.60zM676.46 1211.25h12.60V1215.50h-12.60zM690.42 1213.75h12.60V1216.25h-12.60zM704.38 1213.00h12.60V1216.00h-12.60zM718.34 1214.25h12.60V1216.50h-12.60zM732.30 1213.00h12.60V1216.00h-12.60zM746.26 1209.50h12.60V1215.00h-12.60zM760.22 1210.25h12.60V1215.50h-12.60zM774.18 1213.00h12.60V1216.00h-12.60zM788.14 1215.50h12.60V1217.00h-12.60zM802.10 1208.00h12.60V1214.00h-12.60zM816.06 1215.50h12.60V1217.00h-12.60zM830.02 1210.75h12.60V1215.00h-12.60zM843.98 1215.50h12.60V1217.00h-12.60zM857.94 1214.50h12.60V1216.50h-12.60zM871.90 1206.25h12.60V1213.00h-12.60zM885.86 1210.75h12.60V1215.00h-12.60zM899.82 1210.25h12.60V1215.00h-12.60zM913.78 1214.50h12.60V1216.50h-12.60zM927.74 1208.50h12.60V1214.00h-12.60zM941.70 1204.25h12.60V1212.00h-12.60zM955.66 1210.00h12.60V1215.00h-12.60zM969.62 1208.75h12.60V1214.00h-12.60zM983.58 1208.50h12.60V1214.00h-12.60zM997.54 1206.25h12.60V1213.00h-12.60zM1011.50 1212.50h12.60V1215.50h-12.60zM1025.46 1208.50h12.60V1214.00h-12.60zM1039.42 1212.00h12.60V1215.50h-12.60zM1053.38 1216.50h12.60V1217.50h-12.60zM1067.34 1210.75h12.60V1215.00h-12.60zM1081.30 1209.50h12.60V1214.50h-12.60zM1095.26 1210.75h12.60V1215.00h-12.60zM1109.22 1211.25h12.60V1215.00h-12.60zM1123.18 1216.00h12.60V1217.50h-12.60zM1137.14 1210.75h12.60V1215.00h-12.60zM1151.10 1212.00h12.60V1215.50h-12.60zM1165.06 1213.75h12.60V1216.50h-12.60zM1179.02 1218.00h12.60V1218.50h-12.60zM1192.98 1209.25h12.60V1214.00h-12.60zM1206.94 1211.25h12.60V1215.50h-12.60zM1220.90 1212.00h12.60V1215.50h-12.60zM1234.86 1212.50h12.60V1216.00h-12.60zM1248.82 1209.00h12.60V1214.00h-12.60zM1262.78 1212.00h12.60V1215.50h-12.60zM1276.74 1208.50h12.60V1214.00h-12.60zM1290.70 1215.00h12.60V1217.00h-12.60zM1304.66 1215.50h12.60V1217.00h-12.60zM1318.62 1212.00h12.60V1215.50h-12.60zM1332.58 1210.75h12.60V1215.00h-12.60zM1346.54 1206.00h12.60V1213.00h-12.60zM1360.50 1210.75h12.60V1215.00h-12.60zM1374.46 1217.50h12.60V1218.50h-12.60zM1388.42 1207.25h12.60V1213.00h-12.60zM1402.38 1209.50h12.60V1214.50h-12.60zM1416.34 1215.00h12.60V1216.50h-12.60zM1430.30 1209.00h12.60V1214.00h-12.60zM1444.26 1212.00h12.60V1215.50h-12.60zM1458.22 1211.25h12.60V1215.00h-12.60zM1472.18 1212.50h12.60V1215.50h-12.60zM1486.14 1210.75h12.60V1215.00h-12.60zM1500.60 1208.88h12.60V1214.38h-12.60zM1514.56 1212.62h12.60V1216.88h-12.60zM1528.52 1215.12h12.60V1217.62h-12.60zM1542.48 1214.38h12.60V1217.38h-12.60zM1556.44 1215.62h12.60V1217.88h-12.60zM1570.40 1214.38h12.60V1217.38h-12.60zM1584.36 1210.88h12.60V1216.38h-12.60zM1598.32 1211.62h12.60V1216.88h-12.60zM1612.28 1214.38h12.60V1217.38h-12.60zM1626.24 1216.88h12.60V1218.38h-12.60zM1640.20 1209.38h12.60V1215.38h-12.60zM1654.16 1216.88h12.60V1218.38h-12.60zM1668.12 1212.12h12.60V1216.38h-12.60zM1682.08 1216.88h12.60V1218.38h-12.60zM1696.04 1215.88h12.60V1217.88h-12.60zM1710.00 1207.62h12.60V1214.38h-12.60zM1723.96 1212.12h12.60V1216.38h-12.60zM1737.92 1211.62h12.60V1216.38h-12.60zM1751.88 1215.88h12.60V1217.88h-12.60zM1765.84 1209.88h12.60V1215.38h-12.60zM1779.80 1205.62h12.60V1213.38h-12.60zM1793.76 1211.38h12.60V1216.38h-12.60zM1807.72 1210.12h12.60V1215.38h-12.60zM1821.68 1209.88h12.60V1215.38h-12.60zM1835.64 1207.62h12.60V1214.38h-12.60zM1849.60 1213.88h12.60V1216.88h-12.60zM1863.56 1209.88h12.60V1215.38h-12.60zM1877.52 1213.38h12.60V1216.88h-12.60zM1891.48 1217.88h12.60V1218.88h-12.60zM1905.44 1212.12h12.60V1216.38h-12.60zM1919.40 1210.88h12.60V1215.88h-12.60zM1933.36 1212.12h12.60V1216.38h-12.60zM1947.32 1212.62h12.60V1216.38h-12.60zM1961.28 1217.38h12.60V1218.88h-12.60zM1975.24 1212.12h12.60V1216.38h-12.60zM1989.20 1213.00h12.60V1216.50h-12.60zM2003.16 1215.12h12.60V1217.88h-12.60zM2017.12 1219.38h12.60V1219.88h-12.60zM2031.08 1210.62h12.60V1215.38h-12.60zM2045.04 1212.62h12.60V1216.88h-12.60zM2059.00 1213.38h12.60V1216.88h-12.60zM2072.96 1213.88h12.60V1217.38h-12.60zM2086.92 1210.50h12.60V1215.50h-12.60zM2100.88 1213.38h12.60V1216.88h-12.60zM2114.84 1209.88h12.60V1215.38h-12.60zM2128.80 1216.38h12.60V1218.38h-12.60zM2142.76 1216.88h12.60V1218.38h-12.60zM2156.72 1213.38h12.60V1216.88h-12.60zM2170.68 1212.12h12.60V1216.38h-12.60zM2184.64 1207.38h12.60V1214.38h-12.60zM2198.60 1212.12h12.60V1216.38h-12.60zM2212.56 1218.88h12.60V1219.88h-12.60zM2226.52 1208.75h12.60V1214.50h-12.60zM2240.48 1210.88h12.60V1215.88h-12.60zM2254.44 1216.38h12.60V1217.88h-12.60zM2268.40 1210.00h12.60V1215.50h-12.60zM2282.36 1213.38h12.60V1216.88h-12.60zM2296.32 1212.62h12.60V1216.38h-12.60zM2310.28 1213.88h12.60V1216.88h-12.60zM2324.24 1212.12h12.60V1216.38h-12.60z" fill="#f8eb98"/><path d="M675.10 1207.50h1.36V1213.00h-1.36zM689.06 1211.25h1.36V1215.50h-1.36zM703.02 1213.75h1.36V1216.25h-1.36zM716.98 1213.00h1.36V1216.00h-1.36zM730.94 1214.25h1.36V1216.50h-1.36zM744.90 1213.00h1.36V1216.00h-1.36zM758.86 1209.50h1.36V1215.00h-1.36zM772.82 1210.25h1.36V1215.50h-1.36zM786.78 1213.00h1.36V1216.00h-1.36zM800.74 1215.50h1.36V1217.00h-1.36zM814.70 1208.00h1.36V1214.00h-1.36zM828.66 1215.50h1.36V1217.00h-1.36zM842.62 1210.75h1.36V1215.00h-1.36zM856.58 1215.50h1.36V1217.00h-1.36zM870.54 1214.50h1.36V1216.50h-1.36zM884.50 1206.25h1.36V1213.00h-1.36zM898.46 1210.75h1.36V1215.00h-1.36zM912.42 1210.25h1.36V1215.00h-1.36zM926.38 1214.50h1.36V1216.50h-1.36zM940.34 1208.50h1.36V1214.00h-1.36zM954.30 1204.25h1.36V1212.00h-1.36zM968.26 1210.00h1.36V1215.00h-1.36zM982.22 1208.75h1.36V1214.00h-1.36zM996.18 1208.50h1.36V1214.00h-1.36zM1010.14 1206.25h1.36V1213.00h-1.36zM1024.10 1212.50h1.36V1215.50h-1.36zM1038.06 1208.50h1.36V1214.00h-1.36zM1052.02 1212.00h1.36V1215.50h-1.36zM1065.98 1216.50h1.36V1217.50h-1.36zM1079.94 1210.75h1.36V1215.00h-1.36zM1093.90 1209.50h1.36V1214.50h-1.36zM1107.86 1210.75h1.36V1215.00h-1.36zM1121.82 1211.25h1.36V1215.00h-1.36zM1135.78 1216.00h1.36V1217.50h-1.36zM1149.74 1210.75h1.36V1215.00h-1.36zM1163.70 1212.00h1.36V1215.50h-1.36zM1177.66 1213.75h1.36V1216.50h-1.36zM1191.62 1218.00h1.36V1218.50h-1.36zM1205.58 1209.25h1.36V1214.00h-1.36zM1219.54 1211.25h1.36V1215.50h-1.36zM1233.50 1212.00h1.36V1215.50h-1.36zM1247.46 1212.50h1.36V1216.00h-1.36zM1261.42 1209.00h1.36V1214.00h-1.36zM1275.38 1212.00h1.36V1215.50h-1.36zM1289.34 1208.50h1.36V1214.00h-1.36zM1303.30 1215.00h1.36V1217.00h-1.36zM1317.26 1215.50h1.36V1217.00h-1.36zM1331.22 1212.00h1.36V1215.50h-1.36zM1345.18 1210.75h1.36V1215.00h-1.36zM1359.14 1206.00h1.36V1213.00h-1.36zM1373.10 1210.75h1.36V1215.00h-1.36zM1387.06 1217.50h1.36V1218.50h-1.36zM1401.02 1207.25h1.36V1213.00h-1.36zM1414.98 1209.50h1.36V1214.50h-1.36zM1428.94 1215.00h1.36V1216.50h-1.36zM1442.90 1209.00h1.36V1214.00h-1.36zM1456.86 1212.00h1.36V1215.50h-1.36zM1470.82 1211.25h1.36V1215.00h-1.36zM1484.78 1212.50h1.36V1215.50h-1.36zM1498.74 1210.75h1.36V1215.00h-1.36zM1513.20 1208.88h1.36V1214.38h-1.36zM1527.16 1212.62h1.36V1216.88h-1.36zM1541.12 1215.12h1.36V1217.62h-1.36zM1555.08 1214.38h1.36V1217.38h-1.36zM1569.04 1215.62h1.36V1217.88h-1.36zM1583.00 1214.38h1.36V1217.38h-1.36zM1596.96 1210.88h1.36V1216.38h-1.36zM1610.92 1211.62h1.36V1216.88h-1.36zM1624.88 1214.38h1.36V1217.38h-1.36zM1638.84 1216.88h1.36V1218.38h-1.36zM1652.80 1209.38h1.36V1215.38h-1.36zM1666.76 1216.88h1.36V1218.38h-1.36zM1680.72 1212.12h1.36V1216.38h-1.36zM1694.68 1216.88h1.36V1218.38h-1.36zM1708.64 1215.88h1.36V1217.88h-1.36zM1722.60 1207.62h1.36V1214.38h-1.36zM1736.56 1212.12h1.36V1216.38h-1.36zM1750.52 1211.62h1.36V1216.38h-1.36zM1764.48 1215.88h1.36V1217.88h-1.36zM1778.44 1209.88h1.36V1215.38h-1.36zM1792.40 1205.62h1.36V1213.38h-1.36zM1806.36 1211.38h1.36V1216.38h-1.36zM1820.32 1210.12h1.36V1215.38h-1.36zM1834.28 1209.88h1.36V1215.38h-1.36zM1848.24 1207.62h1.36V1214.38h-1.36zM1862.20 1213.88h1.36V1216.88h-1.36zM1876.16 1209.88h1.36V1215.38h-1.36zM1890.12 1213.38h1.36V1216.88h-1.36zM1904.08 1217.88h1.36V1218.88h-1.36zM1918.04 1212.12h1.36V1216.38h-1.36zM1932.00 1210.88h1.36V1215.88h-1.36zM1945.96 1212.12h1.36V1216.38h-1.36zM1959.92 1212.62h1.36V1216.38h-1.36zM1973.88 1217.38h1.36V1218.88h-1.36zM1987.84 1212.12h1.36V1216.38h-1.36zM2001.80 1213.00h1.36V1216.50h-1.36zM2015.76 1215.12h1.36V1217.88h-1.36zM2029.72 1219.38h1.36V1219.88h-1.36zM2043.68 1210.62h1.36V1215.38h-1.36zM2057.64 1212.62h1.36V1216.88h-1.36zM2071.60 1213.38h1.36V1216.88h-1.36zM2085.56 1213.88h1.36V1217.38h-1.36zM2099.52 1210.50h1.36V1215.50h-1.36zM2113.48 1213.38h1.36V1216.88h-1.36zM2127.44 1209.88h1.36V1215.38h-1.36zM2141.40 1216.38h1.36V1218.38h-1.36zM2155.36 1216.88h1.36V1218.38h-1.36zM2169.32 1213.38h1.36V1216.88h-1.36zM2183.28 1212.12h1.36V1216.38h-1.36zM2197.24 1207.38h1.36V1214.38h-1.36zM2211.20 1212.12h1.36V1216.38h-1.36zM2225.16 1218.88h1.36V1219.88h-1.36zM2239.12 1208.75h1.36V1214.50h-1.36zM2253.08 1210.88h1.36V1215.88h-1.36zM2267.04 1216.38h1.36V1217.88h-1.36zM2281.00 1210.00h1.36V1215.50h-1.36zM2294.96 1213.38h1.36V1216.88h-1.36zM2308.92 1212.62h1.36V1216.38h-1.36zM2322.88 1213.88h1.36V1216.88h-1.36zM2336.84 1212.12h1.36V1216.38h-1.36z" fill="#f8eb98" opacity="0.36"/><path d="M662.50 1213.00h12.60V1219.50h-12.60zM676.46 1215.50h12.60V1219.50h-12.60zM690.42 1216.25h12.60V1219.50h-12.60zM704.38 1216.00h12.60V1219.50h-12.60zM718.34 1216.50h12.60V1219.50h-12.60zM732.30 1216.00h12.60V1219.50h-12.60zM746.26 1215.00h12.60V1219.50h-12.60zM760.22 1215.50h12.60V1219.50h-12.60zM774.18 1216.00h12.60V1219.50h-12.60zM788.14 1217.00h12.60V1219.50h-12.60zM802.10 1214.00h12.60V1219.50h-12.60zM816.06 1217.00h12.60V1219.50h-12.60zM830.02 1215.00h12.60V1219.50h-12.60zM843.98 1217.00h12.60V1219.50h-12.60zM857.94 1216.50h12.60V1219.50h-12.60zM871.90 1213.00h12.60V1219.50h-12.60zM885.86 1215.00h12.60V1219.50h-12.60zM899.82 1215.00h12.60V1219.50h-12.60zM913.78 1216.50h12.60V1219.50h-12.60zM927.74 1214.00h12.60V1219.50h-12.60zM941.70 1212.00h12.60V1219.50h-12.60zM955.66 1215.00h12.60V1219.50h-12.60zM969.62 1214.00h12.60V1219.50h-12.60zM983.58 1214.00h12.60V1219.50h-12.60zM997.54 1213.00h12.60V1219.50h-12.60zM1011.50 1215.50h12.60V1219.50h-12.60zM1025.46 1214.00h12.60V1219.50h-12.60zM1039.42 1215.50h12.60V1219.50h-12.60zM1053.38 1217.50h12.60V1219.50h-12.60zM1067.34 1215.00h12.60V1219.50h-12.60zM1081.30 1214.50h12.60V1219.50h-12.60zM1095.26 1215.00h12.60V1219.50h-12.60zM1109.22 1215.00h12.60V1219.50h-12.60zM1123.18 1217.50h12.60V1219.50h-12.60zM1137.14 1215.00h12.60V1219.50h-12.60zM1151.10 1215.50h12.60V1219.50h-12.60zM1165.06 1216.50h12.60V1219.50h-12.60zM1179.02 1218.50h12.60V1219.50h-12.60zM1192.98 1214.00h12.60V1219.50h-12.60zM1206.94 1215.50h12.60V1219.50h-12.60zM1220.90 1215.50h12.60V1219.50h-12.60zM1234.86 1216.00h12.60V1219.50h-12.60zM1248.82 1214.00h12.60V1219.50h-12.60zM1262.78 1215.50h12.60V1219.50h-12.60zM1276.74 1214.00h12.60V1219.50h-12.60zM1290.70 1217.00h12.60V1219.50h-12.60zM1304.66 1217.00h12.60V1219.50h-12.60zM1318.62 1215.50h12.60V1219.50h-12.60zM1332.58 1215.00h12.60V1219.50h-12.60zM1346.54 1213.00h12.60V1219.50h-12.60zM1360.50 1215.00h12.60V1219.50h-12.60zM1374.46 1218.50h12.60V1219.50h-12.60zM1388.42 1213.00h12.60V1219.50h-12.60zM1402.38 1214.50h12.60V1219.50h-12.60zM1416.34 1216.50h12.60V1219.50h-12.60zM1430.30 1214.00h12.60V1219.50h-12.60zM1444.26 1215.50h12.60V1219.50h-12.60zM1458.22 1215.00h12.60V1219.50h-12.60zM1472.18 1215.50h12.60V1219.50h-12.60zM1486.14 1215.00h12.60V1219.50h-12.60zM1500.60 1214.38h12.60V1220.75h-12.60zM1514.56 1216.88h12.60V1220.75h-12.60zM1528.52 1217.62h12.60V1220.75h-12.60zM1542.48 1217.38h12.60V1220.75h-12.60zM1556.44 1217.88h12.60V1220.75h-12.60zM1570.40 1217.38h12.60V1220.75h-12.60zM1584.36 1216.38h12.60V1220.75h-12.60zM1598.32 1216.88h12.60V1220.75h-12.60zM1612.28 1217.38h12.60V1220.75h-12.60zM1626.24 1218.38h12.60V1220.75h-12.60zM1640.20 1215.38h12.60V1220.75h-12.60zM1654.16 1218.38h12.60V1220.75h-12.60zM1668.12 1216.38h12.60V1220.75h-12.60zM1682.08 1218.38h12.60V1220.75h-12.60zM1696.04 1217.88h12.60V1220.75h-12.60zM1710.00 1214.38h12.60V1220.75h-12.60zM1723.96 1216.38h12.60V1220.75h-12.60zM1737.92 1216.38h12.60V1220.75h-12.60zM1751.88 1217.88h12.60V1220.75h-12.60zM1765.84 1215.38h12.60V1220.75h-12.60zM1779.80 1213.38h12.60V1220.75h-12.60zM1793.76 1216.38h12.60V1220.75h-12.60zM1807.72 1215.38h12.60V1220.75h-12.60zM1821.68 1215.38h12.60V1220.75h-12.60zM1835.64 1214.38h12.60V1220.75h-12.60zM1849.60 1216.88h12.60V1220.75h-12.60zM1863.56 1215.38h12.60V1220.75h-12.60zM1877.52 1216.88h12.60V1220.75h-12.60zM1891.48 1218.88h12.60V1220.75h-12.60zM1905.44 1216.38h12.60V1220.75h-12.60zM1919.40 1215.88h12.60V1220.75h-12.60zM1933.36 1216.38h12.60V1220.75h-12.60zM1947.32 1216.38h12.60V1220.75h-12.60zM1961.28 1218.88h12.60V1220.75h-12.60zM1975.24 1216.38h12.60V1220.75h-12.60zM1989.20 1216.50h12.60V1220.75h-12.60zM2003.16 1217.88h12.60V1220.75h-12.60zM2017.12 1219.88h12.60V1220.75h-12.60zM2031.08 1215.38h12.60V1220.75h-12.60zM2045.04 1216.88h12.60V1220.75h-12.60zM2059.00 1216.88h12.60V1220.75h-12.60zM2072.96 1217.38h12.60V1220.75h-12.60zM2086.92 1215.50h12.60V1220.75h-12.60zM2100.88 1216.88h12.60V1220.75h-12.60zM2114.84 1215.38h12.60V1220.75h-12.60zM2128.80 1218.38h12.60V1220.75h-12.60zM2142.76 1218.38h12.60V1220.75h-12.60zM2156.72 1216.88h12.60V1220.75h-12.60zM2170.68 1216.38h12.60V1220.75h-12.60zM2184.64 1214.38h12.60V1220.75h-12.60zM2198.60 1216.38h12.60V1220.75h-12.60zM2212.56 1219.88h12.60V1220.75h-12.60zM2226.52 1214.50h12.60V1220.75h-12.60zM2240.48 1215.88h12.60V1220.75h-12.60zM2254.44 1217.88h12.60V1220.75h-12.60zM2268.40 1215.50h12.60V1220.75h-12.60zM2282.36 1216.88h12.60V1220.75h-12.60zM2296.32 1216.38h12.60V1220.75h-12.60zM2310.28 1216.88h12.60V1220.75h-12.60zM2324.24 1216.38h12.60V1220.75h-12.60z" fill="#8ccbc2"/><path d="M675.10 1213.00h1.36V1219.50h-1.36zM689.06 1215.50h1.36V1219.50h-1.36zM703.02 1216.25h1.36V1219.50h-1.36zM716.98 1216.00h1.36V1219.50h-1.36zM730.94 1216.50h1.36V1219.50h-1.36zM744.90 1216.00h1.36V1219.50h-1.36zM758.86 1215.00h1.36V1219.50h-1.36zM772.82 1215.50h1.36V1219.50h-1.36zM786.78 1216.00h1.36V1219.50h-1.36zM800.74 1217.00h1.36V1219.50h-1.36zM814.70 1214.00h1.36V1219.50h-1.36zM828.66 1217.00h1.36V1219.50h-1.36zM842.62 1215.00h1.36V1219.50h-1.36zM856.58 1217.00h1.36V1219.50h-1.36zM870.54 1216.50h1.36V1219.50h-1.36zM884.50 1213.00h1.36V1219.50h-1.36zM898.46 1215.00h1.36V1219.50h-1.36zM912.42 1215.00h1.36V1219.50h-1.36zM926.38 1216.50h1.36V1219.50h-1.36zM940.34 1214.00h1.36V1219.50h-1.36zM954.30 1212.00h1.36V1219.50h-1.36zM968.26 1215.00h1.36V1219.50h-1.36zM982.22 1214.00h1.36V1219.50h-1.36zM996.18 1214.00h1.36V1219.50h-1.36zM1010.14 1213.00h1.36V1219.50h-1.36zM1024.10 1215.50h1.36V1219.50h-1.36zM1038.06 1214.00h1.36V1219.50h-1.36zM1052.02 1215.50h1.36V1219.50h-1.36zM1065.98 1217.50h1.36V1219.50h-1.36zM1079.94 1215.00h1.36V1219.50h-1.36zM1093.90 1214.50h1.36V1219.50h-1.36zM1107.86 1215.00h1.36V1219.50h-1.36zM1121.82 1215.00h1.36V1219.50h-1.36zM1135.78 1217.50h1.36V1219.50h-1.36zM1149.74 1215.00h1.36V1219.50h-1.36zM1163.70 1215.50h1.36V1219.50h-1.36zM1177.66 1216.50h1.36V1219.50h-1.36zM1191.62 1218.50h1.36V1219.50h-1.36zM1205.58 1214.00h1.36V1219.50h-1.36zM1219.54 1215.50h1.36V1219.50h-1.36zM1233.50 1215.50h1.36V1219.50h-1.36zM1247.46 1216.00h1.36V1219.50h-1.36zM1261.42 1214.00h1.36V1219.50h-1.36zM1275.38 1215.50h1.36V1219.50h-1.36zM1289.34 1214.00h1.36V1219.50h-1.36zM1303.30 1217.00h1.36V1219.50h-1.36zM1317.26 1217.00h1.36V1219.50h-1.36zM1331.22 1215.50h1.36V1219.50h-1.36zM1345.18 1215.00h1.36V1219.50h-1.36zM1359.14 1213.00h1.36V1219.50h-1.36zM1373.10 1215.00h1.36V1219.50h-1.36zM1387.06 1218.50h1.36V1219.50h-1.36zM1401.02 1213.00h1.36V1219.50h-1.36zM1414.98 1214.50h1.36V1219.50h-1.36zM1428.94 1216.50h1.36V1219.50h-1.36zM1442.90 1214.00h1.36V1219.50h-1.36zM1456.86 1215.50h1.36V1219.50h-1.36zM1470.82 1215.00h1.36V1219.50h-1.36zM1484.78 1215.50h1.36V1219.50h-1.36zM1498.74 1215.00h1.36V1219.50h-1.36zM1513.20 1214.38h1.36V1220.75h-1.36zM1527.16 1216.88h1.36V1220.75h-1.36zM1541.12 1217.62h1.36V1220.75h-1.36zM1555.08 1217.38h1.36V1220.75h-1.36zM1569.04 1217.88h1.36V1220.75h-1.36zM1583.00 1217.38h1.36V1220.75h-1.36zM1596.96 1216.38h1.36V1220.75h-1.36zM1610.92 1216.88h1.36V1220.75h-1.36zM1624.88 1217.38h1.36V1220.75h-1.36zM1638.84 1218.38h1.36V1220.75h-1.36zM1652.80 1215.38h1.36V1220.75h-1.36zM1666.76 1218.38h1.36V1220.75h-1.36zM1680.72 1216.38h1.36V1220.75h-1.36zM1694.68 1218.38h1.36V1220.75h-1.36zM1708.64 1217.88h1.36V1220.75h-1.36zM1722.60 1214.38h1.36V1220.75h-1.36zM1736.56 1216.38h1.36V1220.75h-1.36zM1750.52 1216.38h1.36V1220.75h-1.36zM1764.48 1217.88h1.36V1220.75h-1.36zM1778.44 1215.38h1.36V1220.75h-1.36zM1792.40 1213.38h1.36V1220.75h-1.36zM1806.36 1216.38h1.36V1220.75h-1.36zM1820.32 1215.38h1.36V1220.75h-1.36zM1834.28 1215.38h1.36V1220.75h-1.36zM1848.24 1214.38h1.36V1220.75h-1.36zM1862.20 1216.88h1.36V1220.75h-1.36zM1876.16 1215.38h1.36V1220.75h-1.36zM1890.12 1216.88h1.36V1220.75h-1.36zM1904.08 1218.88h1.36V1220.75h-1.36zM1918.04 1216.38h1.36V1220.75h-1.36zM1932.00 1215.88h1.36V1220.75h-1.36zM1945.96 1216.38h1.36V1220.75h-1.36zM1959.92 1216.38h1.36V1220.75h-1.36zM1973.88 1218.88h1.36V1220.75h-1.36zM1987.84 1216.38h1.36V1220.75h-1.36zM2001.80 1216.50h1.36V1220.75h-1.36zM2015.76 1217.88h1.36V1220.75h-1.36zM2029.72 1219.88h1.36V1220.75h-1.36zM2043.68 1215.38h1.36V1220.75h-1.36zM2057.64 1216.88h1.36V1220.75h-1.36zM2071.60 1216.88h1.36V1220.75h-1.36zM2085.56 1217.38h1.36V1220.75h-1.36zM2099.52 1215.50h1.36V1220.75h-1.36zM2113.48 1216.88h1.36V1220.75h-1.36zM2127.44 1215.38h1.36V1220.75h-1.36zM2141.40 1218.38h1.36V1220.75h-1.36zM2155.36 1218.38h1.36V1220.75h-1.36zM2169.32 1216.88h1.36V1220.75h-1.36zM2183.28 1216.38h1.36V1220.75h-1.36zM2197.24 1214.38h1.36V1220.75h-1.36zM2211.20 1216.38h1.36V1220.75h-1.36zM2225.16 1219.88h1.36V1220.75h-1.36zM2239.12 1214.50h1.36V1220.75h-1.36zM2253.08 1215.88h1.36V1220.75h-1.36zM2267.04 1217.88h1.36V1220.75h-1.36zM2281.00 1215.50h1.36V1220.75h-1.36zM2294.96 1216.88h1.36V1220.75h-1.36zM2308.92 1216.38h1.36V1220.75h-1.36zM2322.88 1216.88h1.36V1220.75h-1.36zM2336.84 1216.38h1.36V1220.75h-1.36z" fill="#8ccbc2" opacity="0.36"/>
<path d="M2337 1215.300H2386.500" stroke="#4f5861" stroke-width="1.800"/>
<path d="M878.700 1219.500v3.500M1309.500 1219.500v3.500M1740.300 1220.500v3.500M2171.300 1220.500v3.500" stroke="#3c4a54" stroke-width="1.300"/>
</svg>
<!-- important signals -->
<div class="b card" style="left:278px;top:1363px;width:2187px;height:400px"></div>
<svg class="abs" style="left:2107px;top:1406px" width="26" height="21" viewBox="2107 1406 26 21"><path d="M2109.500 1408V1424.300H2131.300" fill="none" stroke="#6b7478" stroke-width="1.500"/><path d="M2112 1421.500V1414L2116.500 1410.500L2121.500 1415.500L2126 1411L2130.300 1421.500Z" fill="#6b7478"/></svg>
<div class="b in" style="left:330px;top:1460.500px;width:1029px;height:200px"></div>
<div class="b in" style="left:1384px;top:1460.500px;width:1029px;height:200px"></div>
<div class="b" style="left:352px;top:1511.800px;width:430px;height:0;border-top:1.500px dashed #6a757d"></div>
<div class="b pill" style="left:1164px;width:102.500px;background:#fdf3e1"></div>
<div class="b pill" style="left:1272.500px;width:64px;background:#fff;border:1.800px solid #c3cdd8"></div>
<div class="b pill" style="left:2222px;width:51.800px;background:#9c1f20"></div>
<div class="b pill" style="left:2279.500px;width:51.800px;background:#f9e8e8"></div>
<div class="b pill" style="left:2336.800px;width:54px;background:#fff;border:1.800px solid #c3cdd8"></div>
<div id="txt" style="position:absolute;left:0;top:0;width:2682px;height:1514px;will-change:transform;z-index:5">
<span class="t" style="left:122.50px;top:21.67px;font-size:25.20px;font-weight:400;color:#1c2b34;letter-spacing:0.149px;">Cloud SIEM</span>
<span class="t" style="left:315.50px;top:24.22px;font-size:21.00px;font-weight:400;color:#1c2b34;letter-spacing:0.818px;">Summary</span>
<span class="t" style="left:503.00px;top:24.22px;font-size:21.00px;font-weight:400;color:#636e75;letter-spacing:0.369px;">Content Packs</span>
<span class="t" style="left:712.75px;top:24.22px;font-size:21.00px;font-weight:400;color:#636e75;letter-spacing:0.146px;">Signals</span>
<span class="t" style="left:852.00px;top:24.22px;font-size:21.00px;font-weight:400;color:#636e75;letter-spacing:0.698px;">Detections</span>
<span class="t" style="left:1024.75px;top:24.22px;font-size:21.00px;font-weight:400;color:#636e75;letter-spacing:1.040px;">Investigator</span>
<span class="t" style="left:2372.50px;top:25.07px;font-size:20.00px;font-weight:400;color:#1c2b34;letter-spacing:-0.295px;">Learn more</span>
<span class="t" style="left:2576.00px;top:25.07px;font-size:20.00px;font-weight:400;color:#1c2b34;letter-spacing:-0.502px;">Settings</span>
<span class="t" style="left:278.00px;top:127.68px;font-size:37.00px;font-weight:400;color:#1c2b34;letter-spacing:-0.066px;-webkit-text-stroke:1.11px #1c2b34;">Cloud SIEM</span>
<span class="t" style="left:278.00px;top:183.07px;font-size:22.60px;font-weight:400;color:#1c2b34;letter-spacing:0.594px;">Comprehensive threat detection and response across cloud and on-prem, designed for the entire security team.</span>
<span class="t" style="left:1761.50px;top:130.49px;font-size:19.50px;font-weight:400;color:#6a7a88;letter-spacing:0.155px;">4h</span>
<span class="t" style="left:1808.00px;top:130.49px;font-size:19.50px;font-weight:400;color:#1c2b34;letter-spacing:-0.430px;">Aug 1, 2019, 6:00 am – Aug 1, 2019, 10:00 am</span>
<span class="t" style="left:2267.00px;top:129.74px;font-size:19.50px;font-weight:400;color:#1c2b34;letter-spacing:-0.363px;">Customize Your Page</span>
<span class="t" style="left:323.00px;top:306.42px;font-size:19.00px;font-weight:700;color:rgba(255,255,255,0.86);letter-spacing:0.553px;">CORE CONFIGURATION TASKS</span>
<span class="t" style="left:417.00px;top:363.18px;font-size:18.10px;font-weight:400;color:#fff;letter-spacing:1.045px;-webkit-text-stroke:0.58px #fff;">Move the Cloud</span>
<span class="t" style="left:418.00px;top:389.18px;font-size:18.10px;font-weight:400;color:#fff;letter-spacing:0.448px;-webkit-text-stroke:0.58px #fff;">SIEM index</span>
<span class="t" style="left:703.25px;top:363.18px;font-size:18.10px;font-weight:400;color:#fff;letter-spacing:0.921px;-webkit-text-stroke:0.58px #fff;">Configure 1 Content</span>
<span class="t" style="left:702.25px;top:389.18px;font-size:18.10px;font-weight:400;color:#fff;letter-spacing:0.553px;-webkit-text-stroke:0.58px #fff;">Pack or Log Source</span>
<span class="t" style="left:1029.00px;top:363.18px;font-size:18.10px;font-weight:400;color:#fff;letter-spacing:1.045px;-webkit-text-stroke:0.58px #fff;">Confirm logs</span>
<span class="t" style="left:1029.00px;top:389.18px;font-size:18.10px;font-weight:400;color:#fff;letter-spacing:0.931px;-webkit-text-stroke:0.58px #fff;">are being sent</span>
<span class="t" style="left:1292.00px;top:363.61px;font-size:17.00px;font-weight:700;color:rgba(255,255,255,0.32);letter-spacing:0.127px;">CLOUD SIEM CORE</span>
<span class="t" style="left:1292.00px;top:391.61px;font-size:17.00px;font-weight:700;color:rgba(255,255,255,0.32);letter-spacing:0.704px;">CONFIGURATION DONE</span>
<span class="t" style="left:1635.50px;top:316.49px;font-size:19.50px;font-weight:700;color:rgba(255,255,255,0.86);letter-spacing:0.257px;">WANT TO GO FURTHER?</span>
<span class="t" style="left:1731.00px;top:371.68px;font-size:18.10px;font-weight:400;color:#fff;letter-spacing:0.432px;-webkit-text-stroke:0.58px #fff;">Get</span>
<span class="t" style="left:1730.00px;top:399.18px;font-size:18.10px;font-weight:400;color:#fff;letter-spacing:1.745px;-webkit-text-stroke:0.58px #fff;">Notified</span>
<span class="t" style="left:1965.75px;top:371.68px;font-size:18.10px;font-weight:400;color:#fff;letter-spacing:1.456px;-webkit-text-stroke:0.58px #fff;">Invite other</span>
<span class="t" style="left:1966.75px;top:399.18px;font-size:18.10px;font-weight:400;color:#fff;letter-spacing:1.331px;-webkit-text-stroke:0.58px #fff;">team members</span>
<span class="t" style="left:2382.00px;top:292.92px;font-size:19.00px;font-weight:400;color:#fff;letter-spacing:0.164px;">Hide</span>
<span class="t" style="left:327.75px;top:580.53px;font-size:29.50px;font-weight:400;color:#0b0b0b;letter-spacing:1.484px;-webkit-text-stroke:0.89px #0b0b0b;">Security Coverage</span>
<span class="t" style="left:2136.50px;top:590.13px;font-size:21.70px;font-weight:400;color:#2e6db4;letter-spacing:-0.086px;">View all Content Packs</span>
<span class="t" style="left:351.00px;top:677.67px;font-size:19.00px;font-weight:700;color:#1c2b34;letter-spacing:0.648px;">ENABLED CONTENT PACKS AND INTEGRATIONS</span>
<span class="t" style="left:351.00px;top:752.61px;font-size:23.50px;font-weight:400;color:#8b6dc9;letter-spacing:1.680px;">25</span>
<span class="t" style="left:386.75px;top:756.42px;font-size:19.00px;font-weight:400;color:#3c4a54;letter-spacing:-0.497px;">content packs and integrations enabled.</span>
<span class="t" style="left:710.12px;top:752.61px;font-size:23.50px;font-weight:400;color:#8b6dc9;letter-spacing:0.000px;">6</span>
<span class="t" style="left:731.75px;top:757.08px;font-size:18.22px;font-weight:400;color:#3c4a54;letter-spacing:-0.638px;">of</span>
<span class="t" style="left:754.50px;top:752.61px;font-size:23.50px;font-weight:400;color:#8b6dc9;letter-spacing:0.000px;">9</span>
<span class="t" style="left:775.50px;top:757.45px;font-size:18.96px;font-weight:400;color:#3c4a54;letter-spacing:-0.664px;">categories covered.</span>
<span class="t" style="left:372.00px;top:839.30px;font-size:15.00px;font-weight:400;color:#3c4a54;letter-spacing:-0.238px;">Cloud Audit</span>
<span class="t" style="left:479.00px;top:839.30px;font-size:15.00px;font-weight:400;color:#3c4a54;letter-spacing:-0.311px;">Cloud Security</span>
<span class="t" style="left:604.25px;top:839.30px;font-size:15.00px;font-weight:400;color:#3c4a54;letter-spacing:0.117px;">Authentication</span>
<span class="t" style="left:731.25px;top:839.30px;font-size:15.00px;font-weight:400;color:#3c4a54;letter-spacing:-0.046px;">Collaboration</span>
<span class="t" style="left:850.25px;top:839.30px;font-size:15.00px;font-weight:400;color:#3c4a54;letter-spacing:0.081px;">Network</span>
<span class="t" style="left:938.00px;top:839.30px;font-size:15.00px;font-weight:400;color:#3c4a54;letter-spacing:-0.265px;">Web security</span>
<span class="t" style="left:1536.00px;top:760.61px;font-size:17.00px;font-weight:400;color:#5f6a68;letter-spacing:0.632px;-webkit-text-stroke:0.54px #5f6a68;">Active</span>
<span class="t" style="left:1766.50px;top:760.61px;font-size:17.00px;font-weight:400;color:#5f6a68;letter-spacing:1.131px;-webkit-text-stroke:0.54px #5f6a68;">Warning</span>
<span class="t" style="left:2012.00px;top:760.61px;font-size:17.00px;font-weight:400;color:#5f6a68;letter-spacing:1.068px;-webkit-text-stroke:0.54px #5f6a68;">Broken</span>
<span class="t" style="left:2200.00px;top:760.61px;font-size:17.00px;font-weight:400;color:#5f6a68;letter-spacing:0.427px;-webkit-text-stroke:0.54px #5f6a68;">Custom Log Sources</span>
<span class="t" style="left:1491.00px;top:801.23px;font-size:45.50px;font-weight:700;color:#1c2b34;letter-spacing:0.945px;">12</span>
<span class="t" style="left:1553.50px;top:816.05px;font-size:28.00px;font-weight:700;color:#1c2b34;letter-spacing:0.784px;">(46%)</span>
<span class="t" style="left:1744.25px;top:801.23px;font-size:45.50px;font-weight:700;color:#1c2b34;letter-spacing:0.000px;">6</span>
<span class="t" style="left:1781.50px;top:816.05px;font-size:28.00px;font-weight:700;color:#1c2b34;letter-spacing:0.659px;">(23%)</span>
<span class="t" style="left:1984.50px;top:801.23px;font-size:45.50px;font-weight:700;color:#1c2b34;letter-spacing:0.000px;">5</span>
<span class="t" style="left:2021.50px;top:816.05px;font-size:28.00px;font-weight:700;color:#1c2b34;letter-spacing:0.971px;">(19%)</span>
<span class="t" style="left:2225.50px;top:801.23px;font-size:45.50px;font-weight:700;color:#1c2b34;letter-spacing:0.000px;">3</span>
<span class="t" style="left:2262.75px;top:816.05px;font-size:28.00px;font-weight:700;color:#1c2b34;letter-spacing:1.170px;">(11%)</span>
<span class="t" style="left:351.00px;top:956.42px;font-size:19.00px;font-weight:700;color:#1c2b34;letter-spacing:0.521px;">LOGS ANALYZED BY CLOUD SIEM</span>
<span class="t" style="left:375.00px;top:1079.48px;font-size:13.02px;font-weight:400;color:#3c4a54;letter-spacing:-0.456px;">AWS</span>
<span class="t" style="left:375.00px;top:1106.00px;font-size:12.76px;font-weight:400;color:#3c4a54;letter-spacing:-0.447px;">GCP</span>
<span class="t" style="left:375.00px;top:1128.30px;font-size:15.00px;font-weight:400;color:#3c4a54;letter-spacing:-0.461px;">Azure</span>
<span class="t" style="left:375.00px;top:1152.80px;font-size:15.00px;font-weight:400;color:#3c4a54;letter-spacing:-0.259px;">Custom sources</span>
<span class="t" style="left:629.50px;top:1023.30px;font-size:15.00px;font-weight:400;color:#3c4a54;letter-spacing:-0.342px;">50M</span>
<span class="t" style="left:629.50px;top:1116.30px;font-size:15.00px;font-weight:400;color:#3c4a54;letter-spacing:-0.342px;">25M</span>
<span class="t" style="left:650.00px;top:1209.30px;font-size:15.00px;font-weight:400;color:#3c4a54;letter-spacing:0.000px;">0</span>
<span class="t" style="left:857.00px;top:1223.88px;font-size:14.62px;font-weight:400;color:#3c4a54;letter-spacing:-0.512px;">Jun 18</span>
<span class="t" style="left:1288.50px;top:1224.03px;font-size:14.44px;font-weight:400;color:#3c4a54;letter-spacing:-0.505px;">Jun 25</span>
<span class="t" style="left:1725.25px;top:1224.09px;font-size:14.36px;font-weight:400;color:#3c4a54;letter-spacing:-0.503px;">Jul 2</span>
<span class="t" style="left:2156.75px;top:1224.09px;font-size:14.36px;font-weight:400;color:#3c4a54;letter-spacing:-0.503px;">Jul 9</span>
<span class="t" style="left:326.75px;top:1404.36px;font-size:30.00px;font-weight:400;color:#0b0b0b;letter-spacing:1.521px;-webkit-text-stroke:0.90px #0b0b0b;">Important Signals and Cases</span>
<span class="t" style="left:2140.50px;top:1408.09px;font-size:19.50px;font-weight:400;color:#6b7478;letter-spacing:-0.202px;">Incident Response Dashboard</span>
<span class="t" style="left:351.00px;top:1488.42px;font-size:19.00px;font-weight:700;color:#1c2b34;letter-spacing:0.373px;">RECENT OPEN SIGNALS GROUPED BY RULE</span>
<span class="t" style="left:1172.00px;top:1489.26px;font-size:18.00px;font-weight:400;color:#e08a35;letter-spacing:-0.216px;-webkit-text-stroke:0.58px #e08a35;">2 MEDIUM</span>
<span class="t" style="left:1285.50px;top:1489.71px;font-size:17.47px;font-weight:400;color:#3c4a54;letter-spacing:-0.611px;">+243</span>
<span class="t" style="left:1404.50px;top:1488.42px;font-size:19.00px;font-weight:700;color:#1c2b34;letter-spacing:0.104px;">RECENT OPEN SECURITY CASES</span>
<span class="t" style="left:2230.50px;top:1491.40px;font-size:16.65px;font-weight:400;color:#fff;letter-spacing:-0.583px;-webkit-text-stroke:0.53px #fff;">2 P1</span>
<span class="t" style="left:2288.00px;top:1489.86px;font-size:17.29px;font-weight:400;color:#d04a57;letter-spacing:-0.605px;-webkit-text-stroke:0.55px #d04a57;">2 P2</span>
<span class="t" style="left:2349.50px;top:1489.92px;font-size:17.22px;font-weight:400;color:#3c4a54;letter-spacing:-0.603px;">+13</span>
<span class="t" style="left:6.40px;top:1489.73px;font-size:14.50px;font-weight:400;color:#c9c9cc;letter-spacing:0.948px;">Help</span>
<span class="t" style="left:15.95px;top:1453.29px;font-size:26.00px;font-weight:400;color:#c9c9cc;letter-spacing:0.000px;-webkit-text-stroke:0.78px #c9c9cc;">?</span>
</div>
</body></html>
